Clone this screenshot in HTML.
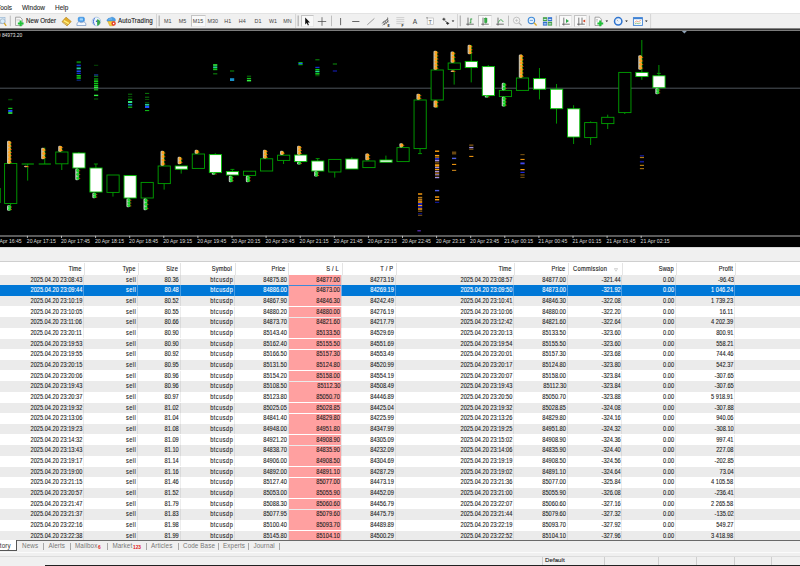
<!DOCTYPE html>
<html lang="en"><head><meta charset="utf-8"><title>Terminal</title>
<style>
html,body{margin:0;padding:0;}
body{width:800px;height:566px;overflow:hidden;position:relative;background:#f0f0f0;
 font-family:"Liberation Sans",sans-serif;color:#222;}
div,span{box-sizing:border-box;}
.abs{position:absolute;}
#menubar{position:absolute;left:0;top:0;width:800px;height:13px;background:#fff;}
#menubar span{position:absolute;top:4px;font-size:7.2px;line-height:8px;color:#2a2a2a;white-space:nowrap;transform:scaleX(0.9);transform-origin:0 50%;-webkit-text-stroke:0.1px currentColor;}
#toolbar{position:absolute;left:0;top:13px;width:800px;height:16px;background:#f0f0f0;border-top:1px solid #e3e3e3;}
.tbt{position:absolute;font-size:6.9px;line-height:8px;color:#222;white-space:nowrap;top:16.7px;transform:scaleX(0.9);transform-origin:0 50%;-webkit-text-stroke:0.12px currentColor;}
.tf{position:absolute;font-size:5.4px;line-height:7px;color:#444;white-space:nowrap;top:18px;text-align:center;width:16px;}
#chart{position:absolute;left:0;top:29px;width:800px;height:219px;background:#000;}
#tbl{position:absolute;left:0;top:261px;width:800px;height:280px;background:#fff;border-top:1px solid #cfcfcf;}
.row{position:absolute;left:0;width:800px;height:10.667px;}
.g{background:#ebebeb;}
.sel{background:#0078d7;}
.c{position:absolute;top:0;height:10.667px;font-size:6.7px;line-height:10.9px;text-align:right;color:#1a1a1a;white-space:nowrap;padding-right:0.9px;border-right:1px solid rgba(0,0,0,0.07);overflow:hidden;-webkit-text-stroke:0.1px currentColor;}
.c span,.h span{display:inline-block;transform:scaleX(0.845);transform-origin:100% 50%;}
.t{letter-spacing:0.55px;}
.sel .c{color:#fff;border-right-color:rgba(255,255,255,0.28);}
.sl{position:absolute;top:0.35px;height:10px;background:#ffa0a0;}
.sel .sl{outline:0.6px solid #3c8ad8;}
.sel .c.slc{color:#222;}
.h{position:absolute;top:1px;height:12px;font-size:6.8px;line-height:12.4px;text-align:right;color:#1a1a1a;white-space:nowrap;padding-right:2.5px;border-right:1px solid #e4e4e4;letter-spacing:0.2px;-webkit-text-stroke:0.12px currentColor;}
#tabs{position:absolute;left:0;top:540px;width:800px;height:26px;background:#f0f0f0;border-top:1px solid #6a6a6a;}
.tab{position:absolute;top:542.3px;font-size:6.3px;line-height:8px;color:#777;white-space:nowrap;letter-spacing:0.1px;}
.tsep{position:absolute;top:543.4px;width:0.8px;height:6.5px;background:#a8a8a8;}
</style></head><body>

<div id="menubar"><span style="left:-3.2px">Tools</span><span style="left:21.7px">Window</span><span style="left:55px">Help</span></div>
<div id="toolbar"></div>
<div class="abs" style="left:0;top:27.5px;width:800px;height:3.2px;background:linear-gradient(#a0a0a0 0,#6a6a6a 0.9px,#3a3a3a 1px,#3a3a3a 2.1px,#7c7c7c 2.2px,#7c7c7c 3px,#000 3.2px);z-index:3"></div>
<div class="tbt" style="left:25.8px">New Order</div>
<div class="tbt" style="left:117.8px;letter-spacing:0.12px">AutoTrading</div>
<div class="abs" style="left:191.2px;top:15px;width:14.40px;height:12.3px;background:#f9f9f9;border:0.7px solid #c4c4c4;border-right-color:#e8e8e8;border-bottom-color:#e8e8e8"></div>
<div class="abs" style="left:300.6px;top:15px;width:13.20px;height:12.3px;background:#f9f9f9;border:0.7px solid #c4c4c4;border-right-color:#e8e8e8;border-bottom-color:#e8e8e8"></div>
<div class="abs" style="left:478px;top:15px;width:14.00px;height:12.3px;background:#f9f9f9;border:0.7px solid #c4c4c4;border-right-color:#e8e8e8;border-bottom-color:#e8e8e8"></div>
<div class="abs" style="left:558.8px;top:15px;width:13.20px;height:12.3px;background:#f9f9f9;border:0.7px solid #c4c4c4;border-right-color:#e8e8e8;border-bottom-color:#e8e8e8"></div>
<div class="abs" style="left:573.8px;top:15px;width:13.20px;height:12.3px;background:#f9f9f9;border:0.7px solid #c4c4c4;border-right-color:#e8e8e8;border-bottom-color:#e8e8e8"></div>
<div class="tf" style="left:159.80px">M1</div>
<div class="tf" style="left:174.50px">M5</div>
<div class="tf" style="left:190.00px">M15</div>
<div class="tf" style="left:204.80px">M30</div>
<div class="tf" style="left:219.70px">H1</div>
<div class="tf" style="left:234.30px">H4</div>
<div class="tf" style="left:250.00px">D1</div>
<div class="tf" style="left:265.00px">W1</div>
<div class="tf" style="left:279.50px">MN</div>
<svg class="abs" style="left:0;top:0" width="800" height="32" viewBox="0 0 800 32">
<line x1="10.3" y1="15.6" x2="10.3" y2="26.2" stroke="#a8a8a8" stroke-width="0.7"/>
<line x1="156.5" y1="14" x2="156.5" y2="28" stroke="#c8c8c8" stroke-width="0.7"/>
<line x1="159.2" y1="15.6" x2="159.2" y2="26.2" stroke="#b4b4b4" stroke-width="1.3"/>
<line x1="295.6" y1="14" x2="295.6" y2="28" stroke="#c8c8c8" stroke-width="0.7"/>
<line x1="298.2" y1="15.6" x2="298.2" y2="26.2" stroke="#b4b4b4" stroke-width="1.3"/>
<line x1="331.5" y1="15.6" x2="331.5" y2="26.2" stroke="#a8a8a8" stroke-width="0.7"/>
<line x1="457.5" y1="14" x2="457.5" y2="28" stroke="#c8c8c8" stroke-width="0.7"/>
<line x1="460.3" y1="15.6" x2="460.3" y2="26.2" stroke="#b4b4b4" stroke-width="1.3"/>
<line x1="508.5" y1="15.6" x2="508.5" y2="26.2" stroke="#a8a8a8" stroke-width="0.7"/>
<line x1="556.3" y1="15.6" x2="556.3" y2="26.2" stroke="#a8a8a8" stroke-width="0.7"/>
<line x1="589.4" y1="15.6" x2="589.4" y2="26.2" stroke="#a8a8a8" stroke-width="0.7"/>
<line x1="650.6" y1="14" x2="650.6" y2="28" stroke="#c8c8c8" stroke-width="0.7"/>
<rect x="-2" y="17.3" width="7" height="6" fill="#dcecf8" stroke="#8fb0cf" stroke-width="0.6"/>
<circle cx="2.6" cy="21.2" r="2.4" fill="#d8ecfa" stroke="#9ab" stroke-width="0.7"/>
<line x1="4.2" y1="23.2" x2="6.2" y2="25.8" stroke="#d9a520" stroke-width="1.3"/>
<path d="M15.6 17.2h4.6l2 2v6.3h-6.6z" fill="#fafafa" stroke="#707070" stroke-width="0.6"/>
<path d="M16.6 19.4h3.4M16.6 20.8h3.4" stroke="#b5b5b5" stroke-width="0.5"/>
<path d="M20.6 20.6v5.6M17.8 23.4h5.8" stroke="#1fc238" stroke-width="2"/>
<path d="M62 21.7l4-4.5 5.2 4.3-4.1 4.4z" fill="#e3ab27" stroke="#b5851a" stroke-width="0.7" stroke-linejoin="round"/>
<path d="M63.8 20.6l5 2.9" stroke="#fff07a" stroke-width="1.5" fill="none"/>
<path d="M63.4 22.6l3.8 2.4" stroke="#d9c58a" stroke-width="0.9" fill="none"/>
<rect x="78.2" y="17.2" width="6.2" height="4.6" rx="1.3" fill="#3f9bea" stroke="#2f80d8" stroke-width="0.5"/>
<rect x="79.6" y="18.3" width="3.4" height="2.2" rx="0.6" fill="#9fd2fb"/>
<path d="M76.9 25.5c-0.4-2.6 1.4-3.9 2.6-3.6 1 1 2.6 1 3.6 0 1.4-0.3 3.2 1 2.8 3.6z" fill="#f4f8fd" stroke="#6f90c2" stroke-width="0.7"/>
<circle cx="96.4" cy="21.5" r="4.3" fill="#eef4fb" stroke="#a9c4e2" stroke-width="0.9"/>
<path d="M94.6 18.2c-1.5 2.1-1.5 4.6 0 6.6" fill="none" stroke="#3f6fd8" stroke-width="1"/>
<path d="M97 19.2c2.6 0.2 3.6 2.2 3.2 3.6-0.4 1.6-1.6 2.8-3 3z" fill="#34a648"/>
<circle cx="96.6" cy="21.2" r="0.8" fill="#2450b8"/>
<path d="M107.6 21l7.4-0.2-1.6 4.9-3.6 0.1z" fill="#f6cf3a" stroke="#c8961c" stroke-width="0.5"/>
<path d="M106.9 20.9c0.2-2 1.8-3 3.2-2.8 0.8-1 3-1.2 3.8-0.2 1.2 0.2 1.6 1.6 1.4 2.8z" fill="#4a9fe6" stroke="#3683cf" stroke-width="0.5"/>
<path d="M108.6 19.8c1-0.9 2.4-1.1 3.4-0.6" stroke="#a8d6fa" stroke-width="0.6" fill="none"/>
<circle cx="113.6" cy="23.5" r="2.2" fill="#e23b2c"/>
<rect x="112.9" y="22.8" width="1.4" height="1.4" fill="#fff"/>
<path d="M305.2 17.4v7l1.6-1.5 1.1 2.5 1-0.5-1.1-2.4h2.2z" fill="#111"/>
<path d="M322 17.2v8.6M317.8 21.5h8.4" stroke="#444" stroke-width="0.7"/>
<line x1="340.6" y1="18" x2="340.6" y2="25.2" stroke="#444" stroke-width="0.8"/>
<line x1="352.2" y1="21.5" x2="359.4" y2="21.5" stroke="#444" stroke-width="0.8"/>
<line x1="367.3" y1="24.8" x2="374.4" y2="18.4" stroke="#777" stroke-width="0.7"/>
<path d="M381.8 23.4l6.4-4.6M382.6 25.2l6.4-4.6M383.4 21.4l1.4 3.6M385 20.4l1.4 3.6M386.6 19.4l1.4 3.4M387.6 17.4v3" stroke="#444" stroke-width="0.6" fill="none"/>
<text x="387.6" y="26.6" font-size="3.4" font-family="Liberation Sans, sans-serif" font-weight="bold" fill="#222">E</text>
<path d="M396.3 17.6h8M396.3 19.6h8M396.3 21.6h8M396.3 23.6h8" stroke="#b8b8b8" stroke-width="0.6"/>
<text x="401.6" y="26.8" font-size="3.4" font-family="Liberation Sans, sans-serif" font-weight="bold" fill="#222">F</text>
<text x="412.8" y="23.8" font-size="6.6" font-family="Liberation Sans, sans-serif" fill="#444">A</text>
<rect x="427.2" y="18" width="6.2" height="6.4" fill="#fbfbfb" stroke="#b0b0b0" stroke-width="0.6"/>
<text x="428.6" y="23.6" font-size="5.4" font-family="Liberation Sans, sans-serif" fill="#555">T</text>
<rect x="426.4" y="17.2" width="1.2" height="1.2" fill="#777"/>
<path d="M442.4 19.2h3M443.9 17.8v2.8M445 20.6l2.6 2.6M446.2 23.4h3M447.7 22v2.8" stroke="#222" stroke-width="0.9" fill="none"/>
<path d="M451.7 20.6h2.6l-1.3 1.5z" fill="#111"/>
<path d="M468 17.6v8M466.2 24.2h7.6" stroke="#444" stroke-width="0.7" fill="none"/>
<path d="M470.8 18.6v4.6M470.8 19h1.4M469.6 22.8h1.2" stroke="#2a9a3a" stroke-width="0.9" fill="none"/>
<path d="M483 17.6v8M481.2 24.2h7.6" stroke="#444" stroke-width="0.7" fill="none"/>
<path d="M485.8 17.2v6.6" stroke="#2a9a3a" stroke-width="0.6"/>
<rect x="484.6" y="18.2" width="2.4" height="4.4" fill="#35b045" stroke="#1f8a30" stroke-width="0.4"/>
<path d="M498 17.6v8M496.2 24.2h7.6" stroke="#444" stroke-width="0.7" fill="none"/>
<path d="M498.4 22.6c1.2-3.4 3.2-3.8 4.8-0.6" stroke="#2a9a3a" stroke-width="0.8" fill="none"/>
<circle cx="516.6" cy="20.4" r="3.2" fill="#f4f4f4" stroke="#b5b5b5" stroke-width="0.8"/>
<path d="M515 20.4h3.2M516.6 18.8v3.2" stroke="#b5b5b5" stroke-width="0.6"/>
<line x1="519" y1="22.8" x2="521.6" y2="25.4" stroke="#b0b0b0" stroke-width="1.2"/>
<circle cx="531.4" cy="20.4" r="3.2" fill="#e4f0fb" stroke="#3f8ad8" stroke-width="1.1"/>
<path d="M529.8 20.4h3.2" stroke="#3f8ad8" stroke-width="0.7"/>
<line x1="534" y1="22.8" x2="536.6" y2="25.4" stroke="#dcaa2c" stroke-width="1.4"/>
<rect x="542.9" y="17.2" width="4.3" height="3.9" fill="#43a047"/>
<rect x="547.8" y="17.2" width="4.3" height="3.9" fill="#2f6fd0"/>
<rect x="542.9" y="21.7" width="4.3" height="3.9" fill="#2f6fd0"/>
<rect x="547.8" y="21.7" width="4.3" height="3.9" fill="#43a047"/>
<path d="M543.6 19.4h2.9M548.5 19.4h2.9M543.6 23.9h2.9M548.5 23.9h2.9" stroke="#dfeefc" stroke-width="1"/>
<path d="M563.8 17.6v8M562 24.2h7.8" stroke="#444" stroke-width="0.7" fill="none"/>
<path d="M566 19l3 2-3 2z" fill="#2fa84a"/>
<path d="M578.8 17.6v8M577 24.2h7.8M582 17.6v6.6" stroke="#444" stroke-width="0.7" fill="none"/>
<path d="M585.2 19.4l-2.6 1.6 2.6 1.6z" fill="#d84a2a"/>
<path d="M595 17.2h4.4l2 2v6.3h-6.4z" fill="#fafafa" stroke="#707070" stroke-width="0.6"/>
<path d="M596 19.6h2M596 21h2" stroke="#999" stroke-width="0.5"/>
<path d="M600.2 20.6v5.6M597.4 23.4h5.8" stroke="#1fc238" stroke-width="2"/>
<path d="M605.5 20.6h2.6l-1.3 1.5z" fill="#111"/>
<circle cx="618.2" cy="21.3" r="3.7" fill="#eaf2fb" stroke="#2f74cf" stroke-width="1.5"/>
<path d="M618.2 21.3l-1.4-1.6" stroke="#888" stroke-width="0.6"/>
<path d="M625.2 20.6h2.6l-1.3 1.5z" fill="#111"/>
<rect x="633.4" y="17.6" width="9" height="7.8" fill="#fdfdfd" stroke="#3f82d4" stroke-width="0.9"/>
<rect x="633.4" y="17.6" width="9" height="1.6" fill="#3f82d4"/>
<path d="M634.6 22.4l2-1.4 1.8 0.8 2.4-1.4" stroke="#d8643a" stroke-width="0.6" fill="none"/>
<path d="M634.6 24l2-0.8 1.8 0.4 2.4-0.8" stroke="#43a047" stroke-width="0.6" fill="none"/>
<path d="M645 20.6h2.6l-1.3 1.5z" fill="#111"/>
</svg>
<div id="chart"></div>
<div class="abs" style="left:0;top:246.7px;width:800px;height:1.6px;background:#d8d8d8"></div>
<svg class="abs" style="left:0;top:0" width="800" height="250" viewBox="0 0 800 250">
<line x1="0" y1="88.2" x2="800" y2="88.2" stroke="#575d67" stroke-width="0.9"/>
<line x1="0.2" y1="188" x2="0.2" y2="203" stroke="#00a400" stroke-width="1"/>
<line x1="10.60" y1="203.5" x2="10.60" y2="209" stroke="#00a400" stroke-width="0.9"/>
<rect x="4.60" y="163.5" width="12.2" height="40.00" fill="#000" stroke="#00a400" stroke-width="0.9"/>
<line x1="27.66" y1="164" x2="27.66" y2="180.6" stroke="#00a400" stroke-width="0.9"/>
<line x1="21.66" y1="164" x2="33.86" y2="164" stroke="#00a400" stroke-width="1.1"/>
<line x1="44.72" y1="147.5" x2="44.72" y2="164" stroke="#00a400" stroke-width="0.9"/>
<line x1="38.72" y1="164" x2="50.92" y2="164" stroke="#00a400" stroke-width="1.1"/>
<line x1="61.78" y1="163.8" x2="61.78" y2="170" stroke="#00a400" stroke-width="0.9"/>
<rect x="55.78" y="152" width="12.2" height="11.80" fill="#000" stroke="#00a400" stroke-width="0.9"/>
<line x1="78.84" y1="152" x2="78.84" y2="153" stroke="#00a400" stroke-width="0.9"/>
<rect x="72.84" y="153" width="12.2" height="15.00" fill="#fff" stroke="#00c000" stroke-width="0.9"/>
<line x1="95.90" y1="164" x2="95.90" y2="168" stroke="#00a400" stroke-width="0.9"/>
<rect x="89.90" y="168" width="12.2" height="24.00" fill="#fff" stroke="#00c000" stroke-width="0.9"/>
<line x1="112.96" y1="192.4" x2="112.96" y2="196.6" stroke="#00a400" stroke-width="0.9"/>
<rect x="106.96" y="175" width="12.2" height="17.40" fill="#000" stroke="#00a400" stroke-width="0.9"/>
<line x1="130.02" y1="175" x2="130.02" y2="175.6" stroke="#00a400" stroke-width="0.9"/>
<rect x="124.02" y="175.6" width="12.2" height="22.40" fill="#fff" stroke="#00c000" stroke-width="0.9"/>
<rect x="141.08" y="182.4" width="12.2" height="15.60" fill="#000" stroke="#00a400" stroke-width="0.9"/>
<line x1="164.14" y1="183.6" x2="164.14" y2="189.6" stroke="#00a400" stroke-width="0.9"/>
<rect x="158.14" y="166" width="12.2" height="17.60" fill="#000" stroke="#00a400" stroke-width="0.9"/>
<line x1="181.20" y1="169.2" x2="181.20" y2="173.6" stroke="#00a400" stroke-width="0.9"/>
<rect x="175.20" y="166" width="12.2" height="3.20" fill="#fff" stroke="#00c000" stroke-width="0.9"/>
<rect x="192.26" y="154" width="12.2" height="14.40" fill="#000" stroke="#00a400" stroke-width="0.9"/>
<line x1="215.32" y1="153.2" x2="215.32" y2="154.6" stroke="#00a400" stroke-width="0.9"/>
<line x1="215.32" y1="172.6" x2="215.32" y2="173.4" stroke="#00a400" stroke-width="0.9"/>
<rect x="209.32" y="154.6" width="12.2" height="18.00" fill="#fff" stroke="#00c000" stroke-width="0.9"/>
<line x1="232.38" y1="169.4" x2="232.38" y2="171.6" stroke="#00a400" stroke-width="0.9"/>
<rect x="226.38" y="171.6" width="12.2" height="3.40" fill="#fff" stroke="#00c000" stroke-width="0.9"/>
<rect x="243.44" y="171.2" width="12.2" height="4.20" fill="#000" stroke="#00a400" stroke-width="0.9"/>
<rect x="260.50" y="158.8" width="12.2" height="12.20" fill="#000" stroke="#00a400" stroke-width="0.9"/>
<line x1="283.56" y1="160.4" x2="283.56" y2="164" stroke="#00a400" stroke-width="0.9"/>
<rect x="277.56" y="155.2" width="12.2" height="5.20" fill="#000" stroke="#00a400" stroke-width="0.9"/>
<line x1="300.62" y1="161.6" x2="300.62" y2="163" stroke="#00a400" stroke-width="0.9"/>
<rect x="294.62" y="155" width="12.2" height="6.60" fill="#fff" stroke="#00c000" stroke-width="0.9"/>
<line x1="317.68" y1="158.6" x2="317.68" y2="161" stroke="#00a400" stroke-width="0.9"/>
<rect x="311.68" y="161" width="12.2" height="10.00" fill="#fff" stroke="#00c000" stroke-width="0.9"/>
<line x1="334.74" y1="159" x2="334.74" y2="159.4" stroke="#00a400" stroke-width="0.9"/>
<line x1="334.74" y1="172" x2="334.74" y2="177.6" stroke="#00a400" stroke-width="0.9"/>
<rect x="328.74" y="159.4" width="12.2" height="12.60" fill="#000" stroke="#00a400" stroke-width="0.9"/>
<line x1="351.80" y1="157.2" x2="351.80" y2="159" stroke="#00a400" stroke-width="0.9"/>
<rect x="345.80" y="159" width="12.2" height="10.00" fill="#fff" stroke="#00c000" stroke-width="0.9"/>
<line x1="368.86" y1="160" x2="368.86" y2="161" stroke="#00a400" stroke-width="0.9"/>
<rect x="362.86" y="161" width="12.2" height="6.60" fill="#000" stroke="#00a400" stroke-width="0.9"/>
<line x1="385.92" y1="155.6" x2="385.92" y2="160" stroke="#00a400" stroke-width="0.9"/>
<rect x="379.92" y="160" width="12.2" height="2.20" fill="#fff" stroke="#00c000" stroke-width="0.9"/>
<rect x="396.98" y="147.6" width="12.2" height="14.00" fill="#000" stroke="#00a400" stroke-width="0.9"/>
<line x1="420.04" y1="148.6" x2="420.04" y2="153.6" stroke="#00a400" stroke-width="0.9"/>
<rect x="414.04" y="100" width="12.2" height="48.60" fill="#000" stroke="#00a400" stroke-width="0.9"/>
<line x1="437.10" y1="100" x2="437.10" y2="108" stroke="#00a400" stroke-width="0.9"/>
<rect x="431.10" y="70" width="12.2" height="30.00" fill="#000" stroke="#00a400" stroke-width="0.9"/>
<line x1="454.16" y1="58" x2="454.16" y2="63" stroke="#00a400" stroke-width="0.9"/>
<line x1="454.16" y1="69.4" x2="454.16" y2="84.6" stroke="#00a400" stroke-width="0.9"/>
<rect x="448.16" y="63" width="12.2" height="6.40" fill="#000" stroke="#00a400" stroke-width="0.9"/>
<line x1="471.22" y1="45" x2="471.22" y2="61.4" stroke="#00a400" stroke-width="0.9"/>
<line x1="471.22" y1="67.6" x2="471.22" y2="82.4" stroke="#00a400" stroke-width="0.9"/>
<rect x="465.22" y="61.4" width="12.2" height="6.20" fill="#fff" stroke="#00c000" stroke-width="0.9"/>
<line x1="488.28" y1="65" x2="488.28" y2="66.6" stroke="#00a400" stroke-width="0.9"/>
<line x1="488.28" y1="95.6" x2="488.28" y2="97" stroke="#00a400" stroke-width="0.9"/>
<rect x="482.28" y="66.6" width="12.2" height="29.00" fill="#fff" stroke="#00c000" stroke-width="0.9"/>
<rect x="499.34" y="90.4" width="12.2" height="6.20" fill="#000" stroke="#00a400" stroke-width="0.9"/>
<rect x="516.40" y="78" width="12.2" height="12.40" fill="#000" stroke="#00a400" stroke-width="0.9"/>
<line x1="539.46" y1="68" x2="539.46" y2="78.6" stroke="#00a400" stroke-width="0.9"/>
<line x1="539.46" y1="89.2" x2="539.46" y2="99.4" stroke="#00a400" stroke-width="0.9"/>
<rect x="533.46" y="78.6" width="12.2" height="10.60" fill="#fff" stroke="#00c000" stroke-width="0.9"/>
<line x1="556.52" y1="84" x2="556.52" y2="89.2" stroke="#00a400" stroke-width="0.9"/>
<line x1="556.52" y1="108.7" x2="556.52" y2="123.6" stroke="#00a400" stroke-width="0.9"/>
<rect x="550.52" y="89.2" width="12.2" height="19.50" fill="#fff" stroke="#00c000" stroke-width="0.9"/>
<line x1="573.58" y1="105.2" x2="573.58" y2="108.8" stroke="#00a400" stroke-width="0.9"/>
<line x1="573.58" y1="137" x2="573.58" y2="144" stroke="#00a400" stroke-width="0.9"/>
<rect x="567.58" y="108.8" width="12.2" height="28.20" fill="#fff" stroke="#00c000" stroke-width="0.9"/>
<line x1="590.64" y1="121.4" x2="590.64" y2="122.6" stroke="#00a400" stroke-width="0.9"/>
<line x1="590.64" y1="137.6" x2="590.64" y2="145" stroke="#00a400" stroke-width="0.9"/>
<rect x="584.64" y="122.6" width="12.2" height="15.00" fill="#000" stroke="#00a400" stroke-width="0.9"/>
<line x1="607.70" y1="114.7" x2="607.70" y2="117.3" stroke="#00a400" stroke-width="0.9"/>
<line x1="607.70" y1="123.6" x2="607.70" y2="129" stroke="#00a400" stroke-width="0.9"/>
<rect x="601.70" y="117.3" width="12.2" height="6.30" fill="#000" stroke="#00a400" stroke-width="0.9"/>
<line x1="624.76" y1="112.6" x2="624.76" y2="114" stroke="#00a400" stroke-width="0.9"/>
<rect x="618.76" y="72.4" width="12.2" height="40.20" fill="#000" stroke="#00a400" stroke-width="0.9"/>
<line x1="641.82" y1="40" x2="641.82" y2="72.4" stroke="#00a400" stroke-width="0.9"/>
<line x1="641.82" y1="76.6" x2="641.82" y2="79.8" stroke="#00a400" stroke-width="0.9"/>
<rect x="635.82" y="72.4" width="12.2" height="4.20" fill="#fff" stroke="#00c000" stroke-width="0.9"/>
<line x1="658.88" y1="65" x2="658.88" y2="75.8" stroke="#00a400" stroke-width="0.9"/>
<rect x="652.88" y="75.8" width="12.2" height="12.00" fill="#fff" stroke="#00c000" stroke-width="0.9"/>
<line x1="93.90" y1="164" x2="97.90" y2="164" stroke="#00a400" stroke-width="0.9"/>
<line x1="230.38" y1="169.4" x2="234.38" y2="169.4" stroke="#00a400" stroke-width="0.9"/>
<line x1="315.68" y1="158.6" x2="319.68" y2="158.6" stroke="#00a400" stroke-width="0.9"/>
<line x1="418.04" y1="153.6" x2="422.04" y2="153.6" stroke="#00a400" stroke-width="0.9"/>
<line x1="656.88" y1="73.4" x2="660.88" y2="73.4" stroke="#00a400" stroke-width="0.9"/>
<line x1="10.60" y1="141.5" x2="10.60" y2="163.5" stroke="#00a400" stroke-width="0.9"/>
<line x1="10.60" y1="206.0" x2="10.60" y2="210.5" stroke="#00a400" stroke-width="0.9"/>
<line x1="44.72" y1="148.5" x2="44.72" y2="159" stroke="#00a400" stroke-width="0.9"/>
<line x1="61.78" y1="146.5" x2="61.78" y2="151.5" stroke="#00a400" stroke-width="0.9"/>
<line x1="78.84" y1="169.1" x2="78.84" y2="180" stroke="#00a400" stroke-width="0.9"/>
<line x1="95.90" y1="193.5" x2="95.90" y2="198" stroke="#00a400" stroke-width="0.9"/>
<line x1="130.02" y1="199.1" x2="130.02" y2="207" stroke="#00a400" stroke-width="0.9"/>
<line x1="147.08" y1="199.1" x2="147.08" y2="210" stroke="#00a400" stroke-width="0.9"/>
<line x1="164.14" y1="151.5" x2="164.14" y2="165.6" stroke="#00a400" stroke-width="0.9"/>
<line x1="181.20" y1="157.5" x2="181.20" y2="164" stroke="#00a400" stroke-width="0.9"/>
<line x1="198.26" y1="150.5" x2="198.26" y2="153.6" stroke="#00a400" stroke-width="0.9"/>
<line x1="232.38" y1="176.5" x2="232.38" y2="182" stroke="#00a400" stroke-width="0.9"/>
<line x1="249.44" y1="176.5" x2="249.44" y2="182" stroke="#00a400" stroke-width="0.9"/>
<line x1="266.50" y1="150.5" x2="266.50" y2="158.4" stroke="#00a400" stroke-width="0.9"/>
<line x1="283.56" y1="151.5" x2="283.56" y2="154.8" stroke="#00a400" stroke-width="0.9"/>
<line x1="300.62" y1="146.5" x2="300.62" y2="154.6" stroke="#00a400" stroke-width="0.9"/>
<line x1="300.62" y1="162.5" x2="300.62" y2="164.4" stroke="#00a400" stroke-width="0.9"/>
<line x1="317.68" y1="171.9" x2="317.68" y2="176.4" stroke="#00a400" stroke-width="0.9"/>
<line x1="368.86" y1="154.1" x2="368.86" y2="160" stroke="#00a400" stroke-width="0.9"/>
<line x1="402.98" y1="143.9" x2="402.98" y2="147.2" stroke="#00a400" stroke-width="0.9"/>
<line x1="420.04" y1="94.5" x2="420.04" y2="99.6" stroke="#00a400" stroke-width="0.9"/>
<line x1="437.10" y1="51.5" x2="437.10" y2="69.6" stroke="#00a400" stroke-width="0.9"/>
<line x1="437.10" y1="101.1" x2="437.10" y2="107.4" stroke="#00a400" stroke-width="0.9"/>
<line x1="454.16" y1="52.1" x2="454.16" y2="62.6" stroke="#00a400" stroke-width="0.9"/>
<line x1="471.22" y1="45.5" x2="471.22" y2="54" stroke="#00a400" stroke-width="0.9"/>
<line x1="505.34" y1="83.5" x2="505.34" y2="90" stroke="#00a400" stroke-width="0.9"/>
<line x1="505.34" y1="97.5" x2="505.34" y2="106.4" stroke="#00a400" stroke-width="0.9"/>
<line x1="522.40" y1="55.1" x2="522.40" y2="77.6" stroke="#00a400" stroke-width="0.9"/>
<line x1="641.82" y1="55.9" x2="641.82" y2="69.6" stroke="#00a400" stroke-width="0.9"/>
<line x1="658.88" y1="88.9" x2="658.88" y2="94" stroke="#00a400" stroke-width="0.9"/>
<rect x="7.00" y="140.80" width="3.3" height="22.90" rx="1.3" fill="#fff3d6" opacity="0.78"/>
<ellipse cx="9.50" cy="142.61" rx="1.45" ry="1.61" fill="#ffa41c"/>
<rect x="10.60" y="142.51" width="1.4" height="0.8" fill="#e8380c" opacity="0.85"/>
<ellipse cx="9.50" cy="145.82" rx="1.45" ry="1.61" fill="#ffa41c"/>
<rect x="10.60" y="145.72" width="1.4" height="0.8" fill="#e8380c" opacity="0.85"/>
<ellipse cx="9.50" cy="149.04" rx="1.45" ry="1.61" fill="#ffa41c"/>
<rect x="10.60" y="148.94" width="1.4" height="0.8" fill="#e8380c" opacity="0.85"/>
<ellipse cx="9.50" cy="152.25" rx="1.45" ry="1.61" fill="#ffa41c"/>
<rect x="10.60" y="152.15" width="1.4" height="0.8" fill="#e8380c" opacity="0.85"/>
<ellipse cx="9.50" cy="155.46" rx="1.45" ry="1.61" fill="#ffa41c"/>
<rect x="10.60" y="155.36" width="1.4" height="0.8" fill="#e8380c" opacity="0.85"/>
<ellipse cx="9.50" cy="158.68" rx="1.45" ry="1.61" fill="#ffa41c"/>
<rect x="10.60" y="158.58" width="1.4" height="0.8" fill="#e8380c" opacity="0.85"/>
<ellipse cx="9.50" cy="161.89" rx="1.45" ry="1.61" fill="#ffa41c"/>
<rect x="10.60" y="161.79" width="1.4" height="0.8" fill="#e8380c" opacity="0.85"/>
<rect x="7.00" y="205.30" width="3.3" height="5.40" rx="1.3" fill="#eefff0" opacity="0.78"/>
<ellipse cx="9.50" cy="206.75" rx="1.45" ry="1.25" fill="#19d92d"/>
<rect x="10.60" y="206.65" width="1.4" height="0.8" fill="#e8380c" opacity="0.85"/>
<ellipse cx="9.50" cy="209.25" rx="1.45" ry="1.25" fill="#19d92d"/>
<rect x="10.60" y="209.15" width="1.4" height="0.8" fill="#e8380c" opacity="0.85"/>
<rect x="24.06" y="165.80" width="3.3" height="1.40" rx="1.3" fill="#fff3d6" opacity="0.78"/>
<ellipse cx="26.56" cy="166.50" rx="1.45" ry="0.50" fill="#ffa41c"/>
<rect x="27.66" y="166.40" width="1.4" height="0.8" fill="#e8380c" opacity="0.85"/>
<rect x="41.12" y="147.80" width="3.3" height="11.40" rx="1.3" fill="#fff3d6" opacity="0.78"/>
<ellipse cx="43.62" cy="149.83" rx="1.45" ry="1.70" fill="#ffa41c"/>
<rect x="44.72" y="149.73" width="1.4" height="0.8" fill="#e8380c" opacity="0.85"/>
<ellipse cx="43.62" cy="153.50" rx="1.45" ry="1.70" fill="#ffa41c"/>
<rect x="44.72" y="153.40" width="1.4" height="0.8" fill="#e8380c" opacity="0.85"/>
<ellipse cx="43.62" cy="157.17" rx="1.45" ry="1.70" fill="#ffa41c"/>
<rect x="44.72" y="157.07" width="1.4" height="0.8" fill="#e8380c" opacity="0.85"/>
<rect x="58.18" y="145.80" width="3.3" height="5.90" rx="1.3" fill="#fff3d6" opacity="0.78"/>
<ellipse cx="60.68" cy="147.38" rx="1.45" ry="1.38" fill="#ffa41c"/>
<rect x="61.78" y="147.28" width="1.4" height="0.8" fill="#e8380c" opacity="0.85"/>
<ellipse cx="60.68" cy="150.12" rx="1.45" ry="1.38" fill="#ffa41c"/>
<rect x="61.78" y="150.03" width="1.4" height="0.8" fill="#e8380c" opacity="0.85"/>
<rect x="75.24" y="168.40" width="3.3" height="11.80" rx="1.3" fill="#eefff0" opacity="0.78"/>
<ellipse cx="77.74" cy="170.50" rx="1.45" ry="1.70" fill="#19d92d"/>
<rect x="78.84" y="170.40" width="1.4" height="0.8" fill="#e8380c" opacity="0.85"/>
<ellipse cx="77.74" cy="174.30" rx="1.45" ry="1.70" fill="#19d92d"/>
<rect x="78.84" y="174.20" width="1.4" height="0.8" fill="#e8380c" opacity="0.85"/>
<ellipse cx="77.74" cy="178.10" rx="1.45" ry="1.70" fill="#19d92d"/>
<rect x="78.84" y="178.00" width="1.4" height="0.8" fill="#e8380c" opacity="0.85"/>
<rect x="92.30" y="192.80" width="3.3" height="5.40" rx="1.3" fill="#eefff0" opacity="0.78"/>
<ellipse cx="94.80" cy="194.25" rx="1.45" ry="1.25" fill="#19d92d"/>
<rect x="95.90" y="194.15" width="1.4" height="0.8" fill="#e8380c" opacity="0.85"/>
<ellipse cx="94.80" cy="196.75" rx="1.45" ry="1.25" fill="#19d92d"/>
<rect x="95.90" y="196.65" width="1.4" height="0.8" fill="#e8380c" opacity="0.85"/>
<rect x="126.42" y="198.40" width="3.3" height="8.80" rx="1.3" fill="#eefff0" opacity="0.78"/>
<ellipse cx="128.92" cy="200.00" rx="1.45" ry="1.40" fill="#19d92d"/>
<rect x="130.02" y="199.90" width="1.4" height="0.8" fill="#e8380c" opacity="0.85"/>
<ellipse cx="128.92" cy="202.80" rx="1.45" ry="1.40" fill="#19d92d"/>
<rect x="130.02" y="202.70" width="1.4" height="0.8" fill="#e8380c" opacity="0.85"/>
<ellipse cx="128.92" cy="205.60" rx="1.45" ry="1.40" fill="#19d92d"/>
<rect x="130.02" y="205.50" width="1.4" height="0.8" fill="#e8380c" opacity="0.85"/>
<rect x="143.48" y="198.40" width="3.3" height="11.80" rx="1.3" fill="#eefff0" opacity="0.78"/>
<ellipse cx="145.98" cy="200.50" rx="1.45" ry="1.70" fill="#19d92d"/>
<rect x="147.08" y="200.40" width="1.4" height="0.8" fill="#e8380c" opacity="0.85"/>
<ellipse cx="145.98" cy="204.30" rx="1.45" ry="1.70" fill="#19d92d"/>
<rect x="147.08" y="204.20" width="1.4" height="0.8" fill="#e8380c" opacity="0.85"/>
<ellipse cx="145.98" cy="208.10" rx="1.45" ry="1.70" fill="#19d92d"/>
<rect x="147.08" y="208.00" width="1.4" height="0.8" fill="#e8380c" opacity="0.85"/>
<rect x="160.54" y="150.80" width="3.3" height="15.00" rx="1.3" fill="#fff3d6" opacity="0.78"/>
<ellipse cx="163.04" cy="152.82" rx="1.45" ry="1.70" fill="#ffa41c"/>
<rect x="164.14" y="152.72" width="1.4" height="0.8" fill="#e8380c" opacity="0.85"/>
<ellipse cx="163.04" cy="156.47" rx="1.45" ry="1.70" fill="#ffa41c"/>
<rect x="164.14" y="156.38" width="1.4" height="0.8" fill="#e8380c" opacity="0.85"/>
<ellipse cx="163.04" cy="160.12" rx="1.45" ry="1.70" fill="#ffa41c"/>
<rect x="164.14" y="160.03" width="1.4" height="0.8" fill="#e8380c" opacity="0.85"/>
<ellipse cx="163.04" cy="163.77" rx="1.45" ry="1.70" fill="#ffa41c"/>
<rect x="164.14" y="163.67" width="1.4" height="0.8" fill="#e8380c" opacity="0.85"/>
<rect x="177.60" y="156.80" width="3.3" height="7.40" rx="1.3" fill="#fff3d6" opacity="0.78"/>
<ellipse cx="180.10" cy="158.75" rx="1.45" ry="1.70" fill="#ffa41c"/>
<rect x="181.20" y="158.65" width="1.4" height="0.8" fill="#e8380c" opacity="0.85"/>
<ellipse cx="180.10" cy="162.25" rx="1.45" ry="1.70" fill="#ffa41c"/>
<rect x="181.20" y="162.15" width="1.4" height="0.8" fill="#e8380c" opacity="0.85"/>
<rect x="194.66" y="149.80" width="3.3" height="4.00" rx="1.3" fill="#fff3d6" opacity="0.78"/>
<ellipse cx="197.16" cy="151.80" rx="1.45" ry="1.70" fill="#ffa41c"/>
<rect x="198.26" y="151.70" width="1.4" height="0.8" fill="#e8380c" opacity="0.85"/>
<rect x="211.72" y="172.80" width="3.3" height="2.00" rx="1.3" fill="#eefff0" opacity="0.78"/>
<ellipse cx="214.22" cy="173.80" rx="1.45" ry="0.80" fill="#19d92d"/>
<rect x="215.32" y="173.70" width="1.4" height="0.8" fill="#e8380c" opacity="0.85"/>
<rect x="228.78" y="175.80" width="3.3" height="6.40" rx="1.3" fill="#eefff0" opacity="0.78"/>
<ellipse cx="231.28" cy="177.50" rx="1.45" ry="1.50" fill="#19d92d"/>
<rect x="232.38" y="177.40" width="1.4" height="0.8" fill="#e8380c" opacity="0.85"/>
<ellipse cx="231.28" cy="180.50" rx="1.45" ry="1.50" fill="#19d92d"/>
<rect x="232.38" y="180.40" width="1.4" height="0.8" fill="#e8380c" opacity="0.85"/>
<rect x="245.84" y="175.80" width="3.3" height="6.40" rx="1.3" fill="#eefff0" opacity="0.78"/>
<ellipse cx="248.34" cy="177.50" rx="1.45" ry="1.50" fill="#19d92d"/>
<rect x="249.44" y="177.40" width="1.4" height="0.8" fill="#e8380c" opacity="0.85"/>
<ellipse cx="248.34" cy="180.50" rx="1.45" ry="1.50" fill="#19d92d"/>
<rect x="249.44" y="180.40" width="1.4" height="0.8" fill="#e8380c" opacity="0.85"/>
<rect x="262.90" y="149.80" width="3.3" height="8.80" rx="1.3" fill="#fff3d6" opacity="0.78"/>
<ellipse cx="265.40" cy="151.40" rx="1.45" ry="1.40" fill="#ffa41c"/>
<rect x="266.50" y="151.30" width="1.4" height="0.8" fill="#e8380c" opacity="0.85"/>
<ellipse cx="265.40" cy="154.20" rx="1.45" ry="1.40" fill="#ffa41c"/>
<rect x="266.50" y="154.10" width="1.4" height="0.8" fill="#e8380c" opacity="0.85"/>
<ellipse cx="265.40" cy="157.00" rx="1.45" ry="1.40" fill="#ffa41c"/>
<rect x="266.50" y="156.90" width="1.4" height="0.8" fill="#e8380c" opacity="0.85"/>
<rect x="279.96" y="150.80" width="3.3" height="4.20" rx="1.3" fill="#fff3d6" opacity="0.78"/>
<ellipse cx="282.46" cy="152.90" rx="1.45" ry="1.70" fill="#ffa41c"/>
<rect x="283.56" y="152.80" width="1.4" height="0.8" fill="#e8380c" opacity="0.85"/>
<rect x="297.02" y="145.80" width="3.3" height="9.00" rx="1.3" fill="#fff3d6" opacity="0.78"/>
<ellipse cx="299.52" cy="147.43" rx="1.45" ry="1.43" fill="#ffa41c"/>
<rect x="300.62" y="147.33" width="1.4" height="0.8" fill="#e8380c" opacity="0.85"/>
<ellipse cx="299.52" cy="150.30" rx="1.45" ry="1.43" fill="#ffa41c"/>
<rect x="300.62" y="150.20" width="1.4" height="0.8" fill="#e8380c" opacity="0.85"/>
<ellipse cx="299.52" cy="153.17" rx="1.45" ry="1.43" fill="#ffa41c"/>
<rect x="300.62" y="153.07" width="1.4" height="0.8" fill="#e8380c" opacity="0.85"/>
<rect x="297.02" y="161.80" width="3.3" height="2.80" rx="1.3" fill="#eefff0" opacity="0.78"/>
<ellipse cx="299.52" cy="163.20" rx="1.45" ry="1.20" fill="#19d92d"/>
<rect x="300.62" y="163.10" width="1.4" height="0.8" fill="#e8380c" opacity="0.85"/>
<rect x="314.08" y="171.20" width="3.3" height="5.40" rx="1.3" fill="#eefff0" opacity="0.78"/>
<ellipse cx="316.58" cy="172.65" rx="1.45" ry="1.25" fill="#19d92d"/>
<rect x="317.68" y="172.55" width="1.4" height="0.8" fill="#e8380c" opacity="0.85"/>
<ellipse cx="316.58" cy="175.15" rx="1.45" ry="1.25" fill="#19d92d"/>
<rect x="317.68" y="175.05" width="1.4" height="0.8" fill="#e8380c" opacity="0.85"/>
<rect x="365.26" y="153.40" width="3.3" height="6.80" rx="1.3" fill="#fff3d6" opacity="0.78"/>
<ellipse cx="367.76" cy="155.20" rx="1.45" ry="1.60" fill="#ffa41c"/>
<rect x="368.86" y="155.10" width="1.4" height="0.8" fill="#e8380c" opacity="0.85"/>
<ellipse cx="367.76" cy="158.40" rx="1.45" ry="1.60" fill="#ffa41c"/>
<rect x="368.86" y="158.30" width="1.4" height="0.8" fill="#e8380c" opacity="0.85"/>
<rect x="399.38" y="143.20" width="3.3" height="4.20" rx="1.3" fill="#fff3d6" opacity="0.78"/>
<ellipse cx="401.88" cy="145.30" rx="1.45" ry="1.70" fill="#ffa41c"/>
<rect x="402.98" y="145.20" width="1.4" height="0.8" fill="#e8380c" opacity="0.85"/>
<rect x="416.44" y="93.80" width="3.3" height="6.00" rx="1.3" fill="#fff3d6" opacity="0.78"/>
<ellipse cx="418.94" cy="95.40" rx="1.45" ry="1.40" fill="#ffa41c"/>
<rect x="420.04" y="95.30" width="1.4" height="0.8" fill="#e8380c" opacity="0.85"/>
<ellipse cx="418.94" cy="98.20" rx="1.45" ry="1.40" fill="#ffa41c"/>
<rect x="420.04" y="98.10" width="1.4" height="0.8" fill="#e8380c" opacity="0.85"/>
<rect x="433.50" y="50.80" width="3.3" height="19.00" rx="1.3" fill="#fff3d6" opacity="0.78"/>
<ellipse cx="436.00" cy="52.55" rx="1.45" ry="1.55" fill="#ffa41c"/>
<rect x="437.10" y="52.45" width="1.4" height="0.8" fill="#e8380c" opacity="0.85"/>
<ellipse cx="436.00" cy="55.65" rx="1.45" ry="1.55" fill="#ffa41c"/>
<rect x="437.10" y="55.55" width="1.4" height="0.8" fill="#e8380c" opacity="0.85"/>
<ellipse cx="436.00" cy="58.75" rx="1.45" ry="1.55" fill="#ffa41c"/>
<rect x="437.10" y="58.65" width="1.4" height="0.8" fill="#e8380c" opacity="0.85"/>
<ellipse cx="436.00" cy="61.85" rx="1.45" ry="1.55" fill="#ffa41c"/>
<rect x="437.10" y="61.75" width="1.4" height="0.8" fill="#e8380c" opacity="0.85"/>
<ellipse cx="436.00" cy="64.95" rx="1.45" ry="1.55" fill="#ffa41c"/>
<rect x="437.10" y="64.85" width="1.4" height="0.8" fill="#e8380c" opacity="0.85"/>
<ellipse cx="436.00" cy="68.05" rx="1.45" ry="1.55" fill="#ffa41c"/>
<rect x="437.10" y="67.95" width="1.4" height="0.8" fill="#e8380c" opacity="0.85"/>
<rect x="433.50" y="100.40" width="3.3" height="7.20" rx="1.3" fill="#fff3d6" opacity="0.78"/>
<ellipse cx="436.00" cy="102.30" rx="1.45" ry="1.70" fill="#ffa41c"/>
<rect x="437.10" y="102.20" width="1.4" height="0.8" fill="#e8380c" opacity="0.85"/>
<ellipse cx="436.00" cy="105.70" rx="1.45" ry="1.70" fill="#ffa41c"/>
<rect x="437.10" y="105.60" width="1.4" height="0.8" fill="#e8380c" opacity="0.85"/>
<rect x="450.56" y="51.40" width="3.3" height="11.40" rx="1.3" fill="#fff3d6" opacity="0.78"/>
<ellipse cx="453.06" cy="53.43" rx="1.45" ry="1.70" fill="#ffa41c"/>
<rect x="454.16" y="53.33" width="1.4" height="0.8" fill="#e8380c" opacity="0.85"/>
<ellipse cx="453.06" cy="57.10" rx="1.45" ry="1.70" fill="#ffa41c"/>
<rect x="454.16" y="57.00" width="1.4" height="0.8" fill="#e8380c" opacity="0.85"/>
<ellipse cx="453.06" cy="60.77" rx="1.45" ry="1.70" fill="#ffa41c"/>
<rect x="454.16" y="60.67" width="1.4" height="0.8" fill="#e8380c" opacity="0.85"/>
<rect x="450.56" y="70.40" width="3.3" height="1.60" rx="1.3" fill="#fff3d6" opacity="0.78"/>
<ellipse cx="453.06" cy="71.20" rx="1.45" ry="0.60" fill="#ffa41c"/>
<rect x="454.16" y="71.10" width="1.4" height="0.8" fill="#e8380c" opacity="0.85"/>
<rect x="467.62" y="44.80" width="3.3" height="9.40" rx="1.3" fill="#fff3d6" opacity="0.78"/>
<ellipse cx="470.12" cy="46.50" rx="1.45" ry="1.50" fill="#ffa41c"/>
<rect x="471.22" y="46.40" width="1.4" height="0.8" fill="#e8380c" opacity="0.85"/>
<ellipse cx="470.12" cy="49.50" rx="1.45" ry="1.50" fill="#ffa41c"/>
<rect x="471.22" y="49.40" width="1.4" height="0.8" fill="#e8380c" opacity="0.85"/>
<ellipse cx="470.12" cy="52.50" rx="1.45" ry="1.50" fill="#ffa41c"/>
<rect x="471.22" y="52.40" width="1.4" height="0.8" fill="#e8380c" opacity="0.85"/>
<rect x="484.68" y="95.80" width="3.3" height="1.80" rx="1.3" fill="#eefff0" opacity="0.78"/>
<ellipse cx="487.18" cy="96.70" rx="1.45" ry="0.70" fill="#19d92d"/>
<rect x="488.28" y="96.60" width="1.4" height="0.8" fill="#e8380c" opacity="0.85"/>
<rect x="501.74" y="82.80" width="3.3" height="7.40" rx="1.3" fill="#eefff0" opacity="0.78"/>
<ellipse cx="504.24" cy="84.75" rx="1.45" ry="1.70" fill="#19d92d"/>
<rect x="505.34" y="84.65" width="1.4" height="0.8" fill="#e8380c" opacity="0.85"/>
<ellipse cx="504.24" cy="88.25" rx="1.45" ry="1.70" fill="#19d92d"/>
<rect x="505.34" y="88.15" width="1.4" height="0.8" fill="#e8380c" opacity="0.85"/>
<rect x="501.74" y="96.80" width="3.3" height="9.80" rx="1.3" fill="#eefff0" opacity="0.78"/>
<ellipse cx="504.24" cy="98.57" rx="1.45" ry="1.57" fill="#19d92d"/>
<rect x="505.34" y="98.47" width="1.4" height="0.8" fill="#e8380c" opacity="0.85"/>
<ellipse cx="504.24" cy="101.70" rx="1.45" ry="1.57" fill="#19d92d"/>
<rect x="505.34" y="101.60" width="1.4" height="0.8" fill="#e8380c" opacity="0.85"/>
<ellipse cx="504.24" cy="104.83" rx="1.45" ry="1.57" fill="#19d92d"/>
<rect x="505.34" y="104.73" width="1.4" height="0.8" fill="#e8380c" opacity="0.85"/>
<rect x="518.80" y="54.40" width="3.3" height="23.40" rx="1.3" fill="#fff3d6" opacity="0.78"/>
<ellipse cx="521.30" cy="56.24" rx="1.45" ry="1.64" fill="#ffa41c"/>
<rect x="522.40" y="56.14" width="1.4" height="0.8" fill="#e8380c" opacity="0.85"/>
<ellipse cx="521.30" cy="59.53" rx="1.45" ry="1.64" fill="#ffa41c"/>
<rect x="522.40" y="59.43" width="1.4" height="0.8" fill="#e8380c" opacity="0.85"/>
<ellipse cx="521.30" cy="62.81" rx="1.45" ry="1.64" fill="#ffa41c"/>
<rect x="522.40" y="62.71" width="1.4" height="0.8" fill="#e8380c" opacity="0.85"/>
<ellipse cx="521.30" cy="66.10" rx="1.45" ry="1.64" fill="#ffa41c"/>
<rect x="522.40" y="66.00" width="1.4" height="0.8" fill="#e8380c" opacity="0.85"/>
<ellipse cx="521.30" cy="69.39" rx="1.45" ry="1.64" fill="#ffa41c"/>
<rect x="522.40" y="69.29" width="1.4" height="0.8" fill="#e8380c" opacity="0.85"/>
<ellipse cx="521.30" cy="72.67" rx="1.45" ry="1.64" fill="#ffa41c"/>
<rect x="522.40" y="72.57" width="1.4" height="0.8" fill="#e8380c" opacity="0.85"/>
<ellipse cx="521.30" cy="75.96" rx="1.45" ry="1.64" fill="#ffa41c"/>
<rect x="522.40" y="75.86" width="1.4" height="0.8" fill="#e8380c" opacity="0.85"/>
<rect x="638.22" y="55.20" width="3.3" height="14.60" rx="1.3" fill="#fff3d6" opacity="0.78"/>
<ellipse cx="640.72" cy="57.17" rx="1.45" ry="1.70" fill="#ffa41c"/>
<rect x="641.82" y="57.07" width="1.4" height="0.8" fill="#e8380c" opacity="0.85"/>
<ellipse cx="640.72" cy="60.72" rx="1.45" ry="1.70" fill="#ffa41c"/>
<rect x="641.82" y="60.62" width="1.4" height="0.8" fill="#e8380c" opacity="0.85"/>
<ellipse cx="640.72" cy="64.28" rx="1.45" ry="1.70" fill="#ffa41c"/>
<rect x="641.82" y="64.18" width="1.4" height="0.8" fill="#e8380c" opacity="0.85"/>
<ellipse cx="640.72" cy="67.83" rx="1.45" ry="1.70" fill="#ffa41c"/>
<rect x="641.82" y="67.73" width="1.4" height="0.8" fill="#e8380c" opacity="0.85"/>
<rect x="655.28" y="88.20" width="3.3" height="6.00" rx="1.3" fill="#eefff0" opacity="0.78"/>
<ellipse cx="657.78" cy="89.80" rx="1.45" ry="1.40" fill="#19d92d"/>
<rect x="658.88" y="89.70" width="1.4" height="0.8" fill="#e8380c" opacity="0.85"/>
<ellipse cx="657.78" cy="92.60" rx="1.45" ry="1.40" fill="#19d92d"/>
<rect x="658.88" y="92.50" width="1.4" height="0.8" fill="#e8380c" opacity="0.85"/>
<rect x="8.2" y="98.90" width="4.2" height="1.4" fill="#064806"/>
<rect x="8.2" y="107.80" width="4.2" height="1.2" fill="#10c818"/>
<rect x="8.2" y="109.90" width="4.2" height="2" fill="#2050ff"/>
<rect x="8.2" y="112.20" width="4.2" height="1.6" fill="#30f040"/>
<rect x="76.6" y="61.20" width="4.2" height="2" fill="#0a7a0a"/>
<rect x="76.6" y="64.60" width="4.2" height="1.6" fill="#1030d0"/>
<rect x="76.6" y="67.50" width="4.2" height="1.8" fill="#20c8a0"/>
<rect x="76.6" y="70.50" width="4.2" height="1.4" fill="#2050ff"/>
<rect x="76.6" y="72.70" width="4.2" height="1.4" fill="#1030d0"/>
<rect x="76.6" y="75.00" width="4.2" height="1.6" fill="#10c818"/>
<rect x="76.6" y="77.20" width="4.2" height="1.6" fill="#10c818"/>
<rect x="76.6" y="79.60" width="4.2" height="1.2" fill="#0a2a80"/>
<rect x="94" y="64.80" width="4.2" height="1" fill="#064806"/>
<rect x="94" y="74.30" width="4.2" height="1.4" fill="#183a90"/>
<rect x="94" y="75.90" width="4.2" height="1" fill="#0a7a0a"/>
<rect x="94" y="78.20" width="4.2" height="1.6" fill="#0a7a0a"/>
<rect x="94" y="80.40" width="4.2" height="1.6" fill="#10c818"/>
<rect x="94" y="82.70" width="4.2" height="1.4" fill="#10c818"/>
<rect x="94" y="84.80" width="4.2" height="1.2" fill="#10c818"/>
<rect x="94" y="86.50" width="4.2" height="1.8" fill="#30f040"/>
<rect x="94" y="89.20" width="4.2" height="1.2" fill="#10c818"/>
<rect x="94" y="94.70" width="4.2" height="1.4" fill="#30f040"/>
<rect x="94" y="98.30" width="4.2" height="1.4" fill="#064806"/>
<rect x="128" y="93.70" width="4.2" height="1" fill="#0a7a0a"/>
<rect x="128" y="96.20" width="4.2" height="1" fill="#064806"/>
<rect x="128" y="98.60" width="4.2" height="1.4" fill="#0a7a0a"/>
<rect x="128" y="101.00" width="4.2" height="2" fill="#30e880"/>
<rect x="128" y="103.90" width="4.2" height="1.6" fill="#1880c0"/>
<rect x="128" y="106.60" width="4.2" height="1.2" fill="#10c818"/>
<rect x="145" y="92.90" width="4.2" height="1" fill="#0a7a0a"/>
<rect x="145" y="96.70" width="4.2" height="1" fill="#0a7a0a"/>
<rect x="145" y="99.00" width="4.2" height="1" fill="#064806"/>
<rect x="145" y="101.90" width="4.2" height="1.6" fill="#064806"/>
<rect x="145" y="104.00" width="4.2" height="1.6" fill="#20c8a0"/>
<rect x="145" y="106.00" width="4.2" height="2" fill="#2050ff"/>
<rect x="145" y="110.10" width="4.2" height="1" fill="#10c818"/>
<rect x="418" y="193.30" width="4.2" height="1.4" fill="#ffa010"/>
<rect x="418" y="196.80" width="4.2" height="1.6" fill="#b87818"/>
<rect x="418" y="198.90" width="4.2" height="1.8" fill="#b87818"/>
<rect x="418" y="201.20" width="4.2" height="1.6" fill="#ffa010"/>
<rect x="418" y="203.10" width="4.2" height="1.6" fill="#2028e0"/>
<rect x="418" y="205.00" width="4.2" height="1.2" fill="#ffa010"/>
<rect x="418" y="206.30" width="4.2" height="1.4" fill="#2028e0"/>
<rect x="418" y="208.00" width="4.2" height="2" fill="#b87818"/>
<rect x="418" y="210.40" width="4.2" height="1.6" fill="#6a4810"/>
<rect x="418" y="213.20" width="4.2" height="1.2" fill="#101890"/>
<rect x="418" y="214.80" width="4.2" height="1.2" fill="#6a4810"/>
<rect x="435" y="150.50" width="4.2" height="1.4" fill="#ffa010"/>
<rect x="435" y="154.90" width="4.2" height="1.4" fill="#ffa010"/>
<rect x="435" y="156.60" width="4.2" height="1.2" fill="#b87818"/>
<rect x="435" y="158.10" width="4.2" height="1.4" fill="#2028e0"/>
<rect x="435" y="159.80" width="4.2" height="1.6" fill="#a090e0"/>
<rect x="435" y="161.90" width="4.2" height="1.4" fill="#6a4810"/>
<rect x="435" y="163.80" width="4.2" height="1.2" fill="#b87818"/>
<rect x="435" y="165.00" width="4.2" height="1.6" fill="#ffa010"/>
<rect x="435" y="166.90" width="4.2" height="1.4" fill="#a090e0"/>
<rect x="435" y="169.00" width="4.2" height="1.2" fill="#ffa010"/>
<rect x="435" y="170.90" width="4.2" height="1.4" fill="#a090e0"/>
<rect x="435" y="172.60" width="4.2" height="1.2" fill="#b87818"/>
<rect x="435" y="174.20" width="4.2" height="1.2" fill="#a090e0"/>
<rect x="435" y="175.50" width="4.2" height="1" fill="#6a4810"/>
<rect x="435" y="177.00" width="4.2" height="1.2" fill="#a090e0"/>
<rect x="435" y="189.90" width="4.2" height="1.4" fill="#5060e0"/>
<rect x="435" y="196.30" width="4.2" height="1.4" fill="#ffa010"/>
<rect x="435" y="199.00" width="4.2" height="1.4" fill="#ffa010"/>
<rect x="435" y="201.80" width="4.2" height="1.2" fill="#101890"/>
<rect x="452" y="151.50" width="4.2" height="3" fill="#6a4810"/>
<rect x="452" y="157.70" width="4.2" height="1.4" fill="#5060e0"/>
<rect x="452" y="163.90" width="4.2" height="1" fill="#ffa010"/>
<rect x="452" y="169.80" width="4.2" height="1.2" fill="#b87818"/>
<rect x="469.2" y="144.40" width="4.2" height="1.6" fill="#6a4810"/>
<rect x="469.2" y="146.90" width="4.2" height="1.4" fill="#a090e0"/>
<rect x="469.2" y="148.80" width="4.2" height="1.2" fill="#6a4810"/>
<rect x="469.2" y="155.90" width="4.2" height="1" fill="#ffa010"/>
<rect x="520.4" y="154.00" width="4.2" height="1.2" fill="#6a4810"/>
<rect x="520.4" y="158.90" width="4.2" height="1" fill="#ffa010"/>
<rect x="520.4" y="162.50" width="4.2" height="1.8" fill="#4048f0"/>
<rect x="520.4" y="169.00" width="4.2" height="1.2" fill="#ffa010"/>
<rect x="520.4" y="171.80" width="4.2" height="1.2" fill="#2028e0"/>
<rect x="520.4" y="174.30" width="4.2" height="1.4" fill="#6a4810"/>
<rect x="520.4" y="176.80" width="4.2" height="1.2" fill="#6a4810"/>
<rect x="639.9" y="155.10" width="4.1" height="1.4" fill="#101890"/>
<rect x="639.9" y="156.90" width="4.1" height="1.2" fill="#b07810"/>
<rect x="639.9" y="160.90" width="4.1" height="1.6" fill="#101890"/>
<rect x="639.9" y="164.80" width="4.1" height="1.2" fill="#b07810"/>
<rect x="639.9" y="168.00" width="4.1" height="1.2" fill="#a06c10"/>
<rect x="213.1" y="64.20" width="4.2" height="1.6" fill="#30f040"/>
<rect x="213.1" y="66.40" width="4.2" height="1.6" fill="#20d090"/>
<rect x="213.1" y="68.40" width="4.2" height="1.8" fill="#10c818"/>
<rect x="213.1" y="73.20" width="4.2" height="1.2" fill="#0a7a0a"/>
<rect x="230" y="70.40" width="4.2" height="1.2" fill="#0a7a0a"/>
<rect x="230" y="78.20" width="4.2" height="2.8" fill="#1890c8"/>
<rect x="246.9" y="75.70" width="4.2" height="1" fill="#0a7a0a"/>
<rect x="246.9" y="77.90" width="4.2" height="1.2" fill="#10c818"/>
<rect x="246.9" y="79.80" width="4.2" height="1.6" fill="#30f040"/>
<rect x="298.4" y="62.10" width="4.2" height="1" fill="#10c818"/>
<rect x="298.4" y="63.00" width="4.2" height="1.2" fill="#2050ff"/>
<rect x="298.4" y="64.20" width="4.2" height="1" fill="#10c818"/>
<rect x="315.3" y="59.20" width="4.2" height="1.2" fill="#0a7a0a"/>
<rect x="315.3" y="66.80" width="4.2" height="1.2" fill="#1030d0"/>
<rect x="315.3" y="68.90" width="4.2" height="1.6" fill="#10c818"/>
<rect x="315.3" y="70.90" width="4.2" height="1.4" fill="#20d890"/>
<rect x="315.3" y="73.00" width="4.2" height="1.6" fill="#10c818"/>
<rect x="315.3" y="75.10" width="4.2" height="1.2" fill="#064806"/>
<rect x="332.8" y="63.40" width="4.2" height="1.2" fill="#0a7a0a"/>
<rect x="332.8" y="70.30" width="4.2" height="1.4" fill="#101890"/>
<rect x="417.4" y="230.2" width="3.4" height="1.2" fill="#6030c0"/>
<line x1="0" y1="236" x2="800" y2="236" stroke="#c8c8c8" stroke-width="0.9"/>
<line x1="-6.70" y1="235.8" x2="-6.70" y2="238" stroke="#d8d8d8" stroke-width="0.8"/>
<text x="-7.30" y="243.3" font-size="5.6" textLength="29" lengthAdjust="spacingAndGlyphs" font-family="Liberation Sans, sans-serif" fill="#dcdcdc">20 Apr 16:45</text>
<line x1="27.40" y1="235.8" x2="27.40" y2="238" stroke="#d8d8d8" stroke-width="0.8"/>
<text x="26.80" y="243.3" font-size="5.6" textLength="29" lengthAdjust="spacingAndGlyphs" font-family="Liberation Sans, sans-serif" fill="#dcdcdc">20 Apr 17:15</text>
<line x1="61.50" y1="235.8" x2="61.50" y2="238" stroke="#d8d8d8" stroke-width="0.8"/>
<text x="60.90" y="243.3" font-size="5.6" textLength="29" lengthAdjust="spacingAndGlyphs" font-family="Liberation Sans, sans-serif" fill="#dcdcdc">20 Apr 17:45</text>
<line x1="95.60" y1="235.8" x2="95.60" y2="238" stroke="#d8d8d8" stroke-width="0.8"/>
<text x="95.00" y="243.3" font-size="5.6" textLength="29" lengthAdjust="spacingAndGlyphs" font-family="Liberation Sans, sans-serif" fill="#dcdcdc">20 Apr 18:15</text>
<line x1="129.70" y1="235.8" x2="129.70" y2="238" stroke="#d8d8d8" stroke-width="0.8"/>
<text x="129.10" y="243.3" font-size="5.6" textLength="29" lengthAdjust="spacingAndGlyphs" font-family="Liberation Sans, sans-serif" fill="#dcdcdc">20 Apr 18:45</text>
<line x1="163.80" y1="235.8" x2="163.80" y2="238" stroke="#d8d8d8" stroke-width="0.8"/>
<text x="163.20" y="243.3" font-size="5.6" textLength="29" lengthAdjust="spacingAndGlyphs" font-family="Liberation Sans, sans-serif" fill="#dcdcdc">20 Apr 19:15</text>
<line x1="197.90" y1="235.8" x2="197.90" y2="238" stroke="#d8d8d8" stroke-width="0.8"/>
<text x="197.30" y="243.3" font-size="5.6" textLength="29" lengthAdjust="spacingAndGlyphs" font-family="Liberation Sans, sans-serif" fill="#dcdcdc">20 Apr 19:45</text>
<line x1="232.00" y1="235.8" x2="232.00" y2="238" stroke="#d8d8d8" stroke-width="0.8"/>
<text x="231.40" y="243.3" font-size="5.6" textLength="29" lengthAdjust="spacingAndGlyphs" font-family="Liberation Sans, sans-serif" fill="#dcdcdc">20 Apr 20:15</text>
<line x1="266.10" y1="235.8" x2="266.10" y2="238" stroke="#d8d8d8" stroke-width="0.8"/>
<text x="265.50" y="243.3" font-size="5.6" textLength="29" lengthAdjust="spacingAndGlyphs" font-family="Liberation Sans, sans-serif" fill="#dcdcdc">20 Apr 20:45</text>
<line x1="300.20" y1="235.8" x2="300.20" y2="238" stroke="#d8d8d8" stroke-width="0.8"/>
<text x="299.60" y="243.3" font-size="5.6" textLength="29" lengthAdjust="spacingAndGlyphs" font-family="Liberation Sans, sans-serif" fill="#dcdcdc">20 Apr 21:15</text>
<line x1="334.30" y1="235.8" x2="334.30" y2="238" stroke="#d8d8d8" stroke-width="0.8"/>
<text x="333.70" y="243.3" font-size="5.6" textLength="29" lengthAdjust="spacingAndGlyphs" font-family="Liberation Sans, sans-serif" fill="#dcdcdc">20 Apr 21:45</text>
<line x1="368.40" y1="235.8" x2="368.40" y2="238" stroke="#d8d8d8" stroke-width="0.8"/>
<text x="367.80" y="243.3" font-size="5.6" textLength="29" lengthAdjust="spacingAndGlyphs" font-family="Liberation Sans, sans-serif" fill="#dcdcdc">20 Apr 22:15</text>
<line x1="402.50" y1="235.8" x2="402.50" y2="238" stroke="#d8d8d8" stroke-width="0.8"/>
<text x="401.90" y="243.3" font-size="5.6" textLength="29" lengthAdjust="spacingAndGlyphs" font-family="Liberation Sans, sans-serif" fill="#dcdcdc">20 Apr 22:45</text>
<line x1="436.60" y1="235.8" x2="436.60" y2="238" stroke="#d8d8d8" stroke-width="0.8"/>
<text x="436.00" y="243.3" font-size="5.6" textLength="29" lengthAdjust="spacingAndGlyphs" font-family="Liberation Sans, sans-serif" fill="#dcdcdc">20 Apr 23:15</text>
<line x1="470.70" y1="235.8" x2="470.70" y2="238" stroke="#d8d8d8" stroke-width="0.8"/>
<text x="470.10" y="243.3" font-size="5.6" textLength="29" lengthAdjust="spacingAndGlyphs" font-family="Liberation Sans, sans-serif" fill="#dcdcdc">20 Apr 23:45</text>
<line x1="504.80" y1="235.8" x2="504.80" y2="238" stroke="#d8d8d8" stroke-width="0.8"/>
<text x="504.20" y="243.3" font-size="5.6" textLength="29" lengthAdjust="spacingAndGlyphs" font-family="Liberation Sans, sans-serif" fill="#dcdcdc">21 Apr 00:15</text>
<line x1="538.90" y1="235.8" x2="538.90" y2="238" stroke="#d8d8d8" stroke-width="0.8"/>
<text x="538.30" y="243.3" font-size="5.6" textLength="29" lengthAdjust="spacingAndGlyphs" font-family="Liberation Sans, sans-serif" fill="#dcdcdc">21 Apr 00:45</text>
<line x1="573.00" y1="235.8" x2="573.00" y2="238" stroke="#d8d8d8" stroke-width="0.8"/>
<text x="572.40" y="243.3" font-size="5.6" textLength="29" lengthAdjust="spacingAndGlyphs" font-family="Liberation Sans, sans-serif" fill="#dcdcdc">21 Apr 01:15</text>
<line x1="607.10" y1="235.8" x2="607.10" y2="238" stroke="#d8d8d8" stroke-width="0.8"/>
<text x="606.50" y="243.3" font-size="5.6" textLength="29" lengthAdjust="spacingAndGlyphs" font-family="Liberation Sans, sans-serif" fill="#dcdcdc">21 Apr 01:45</text>
<line x1="641.20" y1="235.8" x2="641.20" y2="238" stroke="#d8d8d8" stroke-width="0.8"/>
<text x="640.60" y="243.3" font-size="5.6" textLength="29" lengthAdjust="spacingAndGlyphs" font-family="Liberation Sans, sans-serif" fill="#dcdcdc">21 Apr 02:15</text>
<text x="-2.2" y="36.5" font-size="5.7" textLength="24.4" lengthAdjust="spacingAndGlyphs" font-family="Liberation Sans, sans-serif" fill="#e4e4e4">0 84973.20</text>
<path d="M681.4 30.4h6l-3 3.2z" fill="#8fa3b8"/>
</svg>
<div id="tbl">
<div class="h" style="left:0px;width:84.90px"><span>Time</span></div>
<div class="h" style="left:84.4px;width:54.50px"><span>Type</span></div>
<div class="h" style="left:138.4px;width:43.10px"><span>Size</span></div>
<div class="h" style="left:181.0px;width:54.70px"><span>Symbol</span></div>
<div class="h" style="left:235.2px;width:54.30px"><span>Price</span></div>
<div class="h" style="left:289.0px;width:53.90px"><span>S / L</span></div>
<div class="h" style="left:342.4px;width:54.40px"><span>T / P</span></div>
<div class="h" style="left:396.3px;width:118.50px"><span>Time</span></div>
<div class="h" style="left:514.3px;width:54.60px"><span>Price</span></div>
<div class="h" style="left:568.4px;width:54.70px;padding-right:8.6px;text-align:left;padding-left:5px"><span style="transform-origin:0 50%;letter-spacing:0.32px">Commission</span></div>
<svg class="abs" style="left:614.40px;top:5.6px" width="4" height="4" viewBox="0 0 4 4"><path d="M0.4 0.6h3.2l-1.6 2.6z" fill="none" stroke="#aaa" stroke-width="0.5"/></svg>
<div class="h" style="left:622.6px;width:54.70px"><span>Swap</span></div>
<div class="h" style="left:676.8px;width:59.50px"><span>Profit</span></div>
</div>
<div class="row g" style="top:274.500px">
<div class="sl" style="left:289.20px;width:52.00px"></div>
<div class="c" style="left:0px;width:84.00px"><span>2025.04.20 23:08:43</span></div>
<div class="c t" style="left:84.4px;width:53.60px"><span>sell</span></div>
<div class="c" style="left:138.4px;width:42.20px"><span>80.36</span></div>
<div class="c t" style="left:181.0px;width:53.80px"><span>btcusdp</span></div>
<div class="c" style="left:235.2px;width:53.40px"><span>84875.80</span></div>
<div class="c slc" style="left:289.0px;width:53.00px"><span>84877.00</span></div>
<div class="c" style="left:342.4px;width:53.50px"><span>84273.19</span></div>
<div class="c" style="left:396.3px;width:117.60px"><span>2025.04.20 23:08:57</span></div>
<div class="c" style="left:514.3px;width:53.70px"><span>84877.00</span></div>
<div class="c" style="left:568.4px;width:53.80px"><span>-321.44</span></div>
<div class="c" style="left:622.6px;width:53.80px"><span>0.00</span></div>
<div class="c" style="left:676.8px;width:58.60px"><span>-96.43</span></div>
</div>
<div class="row sel" style="top:285.167px">
<div class="sl" style="left:289.20px;width:52.00px"></div>
<div class="c" style="left:0px;width:84.00px"><span>2025.04.20 23:09:44</span></div>
<div class="c t" style="left:84.4px;width:53.60px"><span>sell</span></div>
<div class="c" style="left:138.4px;width:42.20px"><span>80.48</span></div>
<div class="c t" style="left:181.0px;width:53.80px"><span>btcusdp</span></div>
<div class="c" style="left:235.2px;width:53.40px"><span>84886.00</span></div>
<div class="c slc" style="left:289.0px;width:53.00px"><span>84873.00</span></div>
<div class="c" style="left:342.4px;width:53.50px"><span>84269.19</span></div>
<div class="c" style="left:396.3px;width:117.60px"><span>2025.04.20 23:09:50</span></div>
<div class="c" style="left:514.3px;width:53.70px"><span>84873.00</span></div>
<div class="c" style="left:568.4px;width:53.80px"><span>-321.92</span></div>
<div class="c" style="left:622.6px;width:53.80px"><span>0.00</span></div>
<div class="c" style="left:676.8px;width:58.60px"><span>1 046.24</span></div>
</div>
<div class="row g" style="top:295.834px">
<div class="sl" style="left:289.20px;width:52.00px"></div>
<div class="c" style="left:0px;width:84.00px"><span>2025.04.20 23:10:19</span></div>
<div class="c t" style="left:84.4px;width:53.60px"><span>sell</span></div>
<div class="c" style="left:138.4px;width:42.20px"><span>80.52</span></div>
<div class="c t" style="left:181.0px;width:53.80px"><span>btcusdp</span></div>
<div class="c" style="left:235.2px;width:53.40px"><span>84867.90</span></div>
<div class="c slc" style="left:289.0px;width:53.00px"><span>84846.30</span></div>
<div class="c" style="left:342.4px;width:53.50px"><span>84242.49</span></div>
<div class="c" style="left:396.3px;width:117.60px"><span>2025.04.20 23:10:41</span></div>
<div class="c" style="left:514.3px;width:53.70px"><span>84846.30</span></div>
<div class="c" style="left:568.4px;width:53.80px"><span>-322.08</span></div>
<div class="c" style="left:622.6px;width:53.80px"><span>0.00</span></div>
<div class="c" style="left:676.8px;width:58.60px"><span>1 739.23</span></div>
</div>
<div class="row" style="top:306.501px">
<div class="sl" style="left:289.20px;width:52.00px"></div>
<div class="c" style="left:0px;width:84.00px"><span>2025.04.20 23:10:05</span></div>
<div class="c t" style="left:84.4px;width:53.60px"><span>sell</span></div>
<div class="c" style="left:138.4px;width:42.20px"><span>80.55</span></div>
<div class="c t" style="left:181.0px;width:53.80px"><span>btcusdp</span></div>
<div class="c" style="left:235.2px;width:53.40px"><span>84880.20</span></div>
<div class="c slc" style="left:289.0px;width:53.00px"><span>84880.00</span></div>
<div class="c" style="left:342.4px;width:53.50px"><span>84276.19</span></div>
<div class="c" style="left:396.3px;width:117.60px"><span>2025.04.20 23:10:06</span></div>
<div class="c" style="left:514.3px;width:53.70px"><span>84880.00</span></div>
<div class="c" style="left:568.4px;width:53.80px"><span>-322.20</span></div>
<div class="c" style="left:622.6px;width:53.80px"><span>0.00</span></div>
<div class="c" style="left:676.8px;width:58.60px"><span>16.11</span></div>
</div>
<div class="row g" style="top:317.168px">
<div class="sl" style="left:289.20px;width:52.00px"></div>
<div class="c" style="left:0px;width:84.00px"><span>2025.04.20 23:11:06</span></div>
<div class="c t" style="left:84.4px;width:53.60px"><span>sell</span></div>
<div class="c" style="left:138.4px;width:42.20px"><span>80.66</span></div>
<div class="c t" style="left:181.0px;width:53.80px"><span>btcusdp</span></div>
<div class="c" style="left:235.2px;width:53.40px"><span>84873.70</span></div>
<div class="c slc" style="left:289.0px;width:53.00px"><span>84821.60</span></div>
<div class="c" style="left:342.4px;width:53.50px"><span>84217.79</span></div>
<div class="c" style="left:396.3px;width:117.60px"><span>2025.04.20 23:12:42</span></div>
<div class="c" style="left:514.3px;width:53.70px"><span>84821.60</span></div>
<div class="c" style="left:568.4px;width:53.80px"><span>-322.64</span></div>
<div class="c" style="left:622.6px;width:53.80px"><span>0.00</span></div>
<div class="c" style="left:676.8px;width:58.60px"><span>4 202.39</span></div>
</div>
<div class="row" style="top:327.835px">
<div class="sl" style="left:289.20px;width:52.00px"></div>
<div class="c" style="left:0px;width:84.00px"><span>2025.04.20 23:20:11</span></div>
<div class="c t" style="left:84.4px;width:53.60px"><span>sell</span></div>
<div class="c" style="left:138.4px;width:42.20px"><span>80.90</span></div>
<div class="c t" style="left:181.0px;width:53.80px"><span>btcusdp</span></div>
<div class="c" style="left:235.2px;width:53.40px"><span>85143.40</span></div>
<div class="c slc" style="left:289.0px;width:53.00px"><span>85133.50</span></div>
<div class="c" style="left:342.4px;width:53.50px"><span>84529.69</span></div>
<div class="c" style="left:396.3px;width:117.60px"><span>2025.04.20 23:20:13</span></div>
<div class="c" style="left:514.3px;width:53.70px"><span>85133.50</span></div>
<div class="c" style="left:568.4px;width:53.80px"><span>-323.60</span></div>
<div class="c" style="left:622.6px;width:53.80px"><span>0.00</span></div>
<div class="c" style="left:676.8px;width:58.60px"><span>800.91</span></div>
</div>
<div class="row g" style="top:338.502px">
<div class="sl" style="left:289.20px;width:52.00px"></div>
<div class="c" style="left:0px;width:84.00px"><span>2025.04.20 23:19:53</span></div>
<div class="c t" style="left:84.4px;width:53.60px"><span>sell</span></div>
<div class="c" style="left:138.4px;width:42.20px"><span>80.90</span></div>
<div class="c t" style="left:181.0px;width:53.80px"><span>btcusdp</span></div>
<div class="c" style="left:235.2px;width:53.40px"><span>85162.40</span></div>
<div class="c slc" style="left:289.0px;width:53.00px"><span>85155.50</span></div>
<div class="c" style="left:342.4px;width:53.50px"><span>84551.69</span></div>
<div class="c" style="left:396.3px;width:117.60px"><span>2025.04.20 23:19:54</span></div>
<div class="c" style="left:514.3px;width:53.70px"><span>85155.50</span></div>
<div class="c" style="left:568.4px;width:53.80px"><span>-323.60</span></div>
<div class="c" style="left:622.6px;width:53.80px"><span>0.00</span></div>
<div class="c" style="left:676.8px;width:58.60px"><span>558.21</span></div>
</div>
<div class="row" style="top:349.169px">
<div class="sl" style="left:289.20px;width:52.00px"></div>
<div class="c" style="left:0px;width:84.00px"><span>2025.04.20 23:19:55</span></div>
<div class="c t" style="left:84.4px;width:53.60px"><span>sell</span></div>
<div class="c" style="left:138.4px;width:42.20px"><span>80.92</span></div>
<div class="c t" style="left:181.0px;width:53.80px"><span>btcusdp</span></div>
<div class="c" style="left:235.2px;width:53.40px"><span>85166.50</span></div>
<div class="c slc" style="left:289.0px;width:53.00px"><span>85157.30</span></div>
<div class="c" style="left:342.4px;width:53.50px"><span>84553.49</span></div>
<div class="c" style="left:396.3px;width:117.60px"><span>2025.04.20 23:20:01</span></div>
<div class="c" style="left:514.3px;width:53.70px"><span>85157.30</span></div>
<div class="c" style="left:568.4px;width:53.80px"><span>-323.68</span></div>
<div class="c" style="left:622.6px;width:53.80px"><span>0.00</span></div>
<div class="c" style="left:676.8px;width:58.60px"><span>744.46</span></div>
</div>
<div class="row g" style="top:359.836px">
<div class="sl" style="left:289.20px;width:52.00px"></div>
<div class="c" style="left:0px;width:84.00px"><span>2025.04.20 23:20:15</span></div>
<div class="c t" style="left:84.4px;width:53.60px"><span>sell</span></div>
<div class="c" style="left:138.4px;width:42.20px"><span>80.95</span></div>
<div class="c t" style="left:181.0px;width:53.80px"><span>btcusdp</span></div>
<div class="c" style="left:235.2px;width:53.40px"><span>85131.50</span></div>
<div class="c slc" style="left:289.0px;width:53.00px"><span>85124.80</span></div>
<div class="c" style="left:342.4px;width:53.50px"><span>84520.99</span></div>
<div class="c" style="left:396.3px;width:117.60px"><span>2025.04.20 23:20:17</span></div>
<div class="c" style="left:514.3px;width:53.70px"><span>85124.80</span></div>
<div class="c" style="left:568.4px;width:53.80px"><span>-323.80</span></div>
<div class="c" style="left:622.6px;width:53.80px"><span>0.00</span></div>
<div class="c" style="left:676.8px;width:58.60px"><span>542.37</span></div>
</div>
<div class="row" style="top:370.503px">
<div class="sl" style="left:289.20px;width:52.00px"></div>
<div class="c" style="left:0px;width:84.00px"><span>2025.04.20 23:20:06</span></div>
<div class="c t" style="left:84.4px;width:53.60px"><span>sell</span></div>
<div class="c" style="left:138.4px;width:42.20px"><span>80.96</span></div>
<div class="c t" style="left:181.0px;width:53.80px"><span>btcusdp</span></div>
<div class="c" style="left:235.2px;width:53.40px"><span>85154.20</span></div>
<div class="c slc" style="left:289.0px;width:53.00px"><span>85158.00</span></div>
<div class="c" style="left:342.4px;width:53.50px"><span>84554.19</span></div>
<div class="c" style="left:396.3px;width:117.60px"><span>2025.04.20 23:20:07</span></div>
<div class="c" style="left:514.3px;width:53.70px"><span>85158.00</span></div>
<div class="c" style="left:568.4px;width:53.80px"><span>-323.84</span></div>
<div class="c" style="left:622.6px;width:53.80px"><span>0.00</span></div>
<div class="c" style="left:676.8px;width:58.60px"><span>-307.65</span></div>
</div>
<div class="row g" style="top:381.170px">
<div class="sl" style="left:289.20px;width:52.00px"></div>
<div class="c" style="left:0px;width:84.00px"><span>2025.04.20 23:19:43</span></div>
<div class="c t" style="left:84.4px;width:53.60px"><span>sell</span></div>
<div class="c" style="left:138.4px;width:42.20px"><span>80.96</span></div>
<div class="c t" style="left:181.0px;width:53.80px"><span>btcusdp</span></div>
<div class="c" style="left:235.2px;width:53.40px"><span>85108.50</span></div>
<div class="c slc" style="left:289.0px;width:53.00px"><span>85112.30</span></div>
<div class="c" style="left:342.4px;width:53.50px"><span>84508.49</span></div>
<div class="c" style="left:396.3px;width:117.60px"><span>2025.04.20 23:19:43</span></div>
<div class="c" style="left:514.3px;width:53.70px"><span>85112.30</span></div>
<div class="c" style="left:568.4px;width:53.80px"><span>-323.84</span></div>
<div class="c" style="left:622.6px;width:53.80px"><span>0.00</span></div>
<div class="c" style="left:676.8px;width:58.60px"><span>-307.65</span></div>
</div>
<div class="row" style="top:391.837px">
<div class="sl" style="left:289.20px;width:52.00px"></div>
<div class="c" style="left:0px;width:84.00px"><span>2025.04.20 23:20:37</span></div>
<div class="c t" style="left:84.4px;width:53.60px"><span>sell</span></div>
<div class="c" style="left:138.4px;width:42.20px"><span>80.97</span></div>
<div class="c t" style="left:181.0px;width:53.80px"><span>btcusdp</span></div>
<div class="c" style="left:235.2px;width:53.40px"><span>85123.80</span></div>
<div class="c slc" style="left:289.0px;width:53.00px"><span>85050.70</span></div>
<div class="c" style="left:342.4px;width:53.50px"><span>84446.89</span></div>
<div class="c" style="left:396.3px;width:117.60px"><span>2025.04.20 23:20:50</span></div>
<div class="c" style="left:514.3px;width:53.70px"><span>85050.70</span></div>
<div class="c" style="left:568.4px;width:53.80px"><span>-323.88</span></div>
<div class="c" style="left:622.6px;width:53.80px"><span>0.00</span></div>
<div class="c" style="left:676.8px;width:58.60px"><span>5 918.91</span></div>
</div>
<div class="row g" style="top:402.504px">
<div class="sl" style="left:289.20px;width:52.00px"></div>
<div class="c" style="left:0px;width:84.00px"><span>2025.04.20 23:19:32</span></div>
<div class="c t" style="left:84.4px;width:53.60px"><span>sell</span></div>
<div class="c" style="left:138.4px;width:42.20px"><span>81.02</span></div>
<div class="c t" style="left:181.0px;width:53.80px"><span>btcusdp</span></div>
<div class="c" style="left:235.2px;width:53.40px"><span>85025.05</span></div>
<div class="c slc" style="left:289.0px;width:53.00px"><span>85028.85</span></div>
<div class="c" style="left:342.4px;width:53.50px"><span>84425.04</span></div>
<div class="c" style="left:396.3px;width:117.60px"><span>2025.04.20 23:19:32</span></div>
<div class="c" style="left:514.3px;width:53.70px"><span>85028.85</span></div>
<div class="c" style="left:568.4px;width:53.80px"><span>-324.08</span></div>
<div class="c" style="left:622.6px;width:53.80px"><span>0.00</span></div>
<div class="c" style="left:676.8px;width:58.60px"><span>-307.88</span></div>
</div>
<div class="row" style="top:413.171px">
<div class="sl" style="left:289.20px;width:52.00px"></div>
<div class="c" style="left:0px;width:84.00px"><span>2025.04.20 23:13:06</span></div>
<div class="c t" style="left:84.4px;width:53.60px"><span>sell</span></div>
<div class="c" style="left:138.4px;width:42.20px"><span>81.04</span></div>
<div class="c t" style="left:181.0px;width:53.80px"><span>btcusdp</span></div>
<div class="c" style="left:235.2px;width:53.40px"><span>84841.40</span></div>
<div class="c slc" style="left:289.0px;width:53.00px"><span>84829.80</span></div>
<div class="c" style="left:342.4px;width:53.50px"><span>84225.99</span></div>
<div class="c" style="left:396.3px;width:117.60px"><span>2025.04.20 23:13:26</span></div>
<div class="c" style="left:514.3px;width:53.70px"><span>84829.80</span></div>
<div class="c" style="left:568.4px;width:53.80px"><span>-324.16</span></div>
<div class="c" style="left:622.6px;width:53.80px"><span>0.00</span></div>
<div class="c" style="left:676.8px;width:58.60px"><span>940.06</span></div>
</div>
<div class="row g" style="top:423.838px">
<div class="sl" style="left:289.20px;width:52.00px"></div>
<div class="c" style="left:0px;width:84.00px"><span>2025.04.20 23:19:23</span></div>
<div class="c t" style="left:84.4px;width:53.60px"><span>sell</span></div>
<div class="c" style="left:138.4px;width:42.20px"><span>81.08</span></div>
<div class="c t" style="left:181.0px;width:53.80px"><span>btcusdp</span></div>
<div class="c" style="left:235.2px;width:53.40px"><span>84948.00</span></div>
<div class="c slc" style="left:289.0px;width:53.00px"><span>84951.80</span></div>
<div class="c" style="left:342.4px;width:53.50px"><span>84347.99</span></div>
<div class="c" style="left:396.3px;width:117.60px"><span>2025.04.20 23:19:25</span></div>
<div class="c" style="left:514.3px;width:53.70px"><span>84951.80</span></div>
<div class="c" style="left:568.4px;width:53.80px"><span>-324.32</span></div>
<div class="c" style="left:622.6px;width:53.80px"><span>0.00</span></div>
<div class="c" style="left:676.8px;width:58.60px"><span>-308.10</span></div>
</div>
<div class="row" style="top:434.505px">
<div class="sl" style="left:289.20px;width:52.00px"></div>
<div class="c" style="left:0px;width:84.00px"><span>2025.04.20 23:14:32</span></div>
<div class="c t" style="left:84.4px;width:53.60px"><span>sell</span></div>
<div class="c" style="left:138.4px;width:42.20px"><span>81.09</span></div>
<div class="c t" style="left:181.0px;width:53.80px"><span>btcusdp</span></div>
<div class="c" style="left:235.2px;width:53.40px"><span>84921.20</span></div>
<div class="c slc" style="left:289.0px;width:53.00px"><span>84908.90</span></div>
<div class="c" style="left:342.4px;width:53.50px"><span>84305.09</span></div>
<div class="c" style="left:396.3px;width:117.60px"><span>2025.04.20 23:15:02</span></div>
<div class="c" style="left:514.3px;width:53.70px"><span>84908.90</span></div>
<div class="c" style="left:568.4px;width:53.80px"><span>-324.36</span></div>
<div class="c" style="left:622.6px;width:53.80px"><span>0.00</span></div>
<div class="c" style="left:676.8px;width:58.60px"><span>997.41</span></div>
</div>
<div class="row g" style="top:445.172px">
<div class="sl" style="left:289.20px;width:52.00px"></div>
<div class="c" style="left:0px;width:84.00px"><span>2025.04.20 23:13:43</span></div>
<div class="c t" style="left:84.4px;width:53.60px"><span>sell</span></div>
<div class="c" style="left:138.4px;width:42.20px"><span>81.10</span></div>
<div class="c t" style="left:181.0px;width:53.80px"><span>btcusdp</span></div>
<div class="c" style="left:235.2px;width:53.40px"><span>84838.70</span></div>
<div class="c slc" style="left:289.0px;width:53.00px"><span>84835.90</span></div>
<div class="c" style="left:342.4px;width:53.50px"><span>84232.09</span></div>
<div class="c" style="left:396.3px;width:117.60px"><span>2025.04.20 23:14:06</span></div>
<div class="c" style="left:514.3px;width:53.70px"><span>84835.90</span></div>
<div class="c" style="left:568.4px;width:53.80px"><span>-324.40</span></div>
<div class="c" style="left:622.6px;width:53.80px"><span>0.00</span></div>
<div class="c" style="left:676.8px;width:58.60px"><span>227.08</span></div>
</div>
<div class="row" style="top:455.839px">
<div class="sl" style="left:289.20px;width:52.00px"></div>
<div class="c" style="left:0px;width:84.00px"><span>2025.04.20 23:19:17</span></div>
<div class="c t" style="left:84.4px;width:53.60px"><span>sell</span></div>
<div class="c" style="left:138.4px;width:42.20px"><span>81.14</span></div>
<div class="c t" style="left:181.0px;width:53.80px"><span>btcusdp</span></div>
<div class="c" style="left:235.2px;width:53.40px"><span>84906.00</span></div>
<div class="c slc" style="left:289.0px;width:53.00px"><span>84908.50</span></div>
<div class="c" style="left:342.4px;width:53.50px"><span>84304.69</span></div>
<div class="c" style="left:396.3px;width:117.60px"><span>2025.04.20 23:19:19</span></div>
<div class="c" style="left:514.3px;width:53.70px"><span>84908.50</span></div>
<div class="c" style="left:568.4px;width:53.80px"><span>-324.56</span></div>
<div class="c" style="left:622.6px;width:53.80px"><span>0.00</span></div>
<div class="c" style="left:676.8px;width:58.60px"><span>-202.85</span></div>
</div>
<div class="row g" style="top:466.506px">
<div class="sl" style="left:289.20px;width:52.00px"></div>
<div class="c" style="left:0px;width:84.00px"><span>2025.04.20 23:19:00</span></div>
<div class="c t" style="left:84.4px;width:53.60px"><span>sell</span></div>
<div class="c" style="left:138.4px;width:42.20px"><span>81.16</span></div>
<div class="c t" style="left:181.0px;width:53.80px"><span>btcusdp</span></div>
<div class="c" style="left:235.2px;width:53.40px"><span>84892.00</span></div>
<div class="c slc" style="left:289.0px;width:53.00px"><span>84891.10</span></div>
<div class="c" style="left:342.4px;width:53.50px"><span>84287.29</span></div>
<div class="c" style="left:396.3px;width:117.60px"><span>2025.04.20 23:19:02</span></div>
<div class="c" style="left:514.3px;width:53.70px"><span>84891.10</span></div>
<div class="c" style="left:568.4px;width:53.80px"><span>-324.64</span></div>
<div class="c" style="left:622.6px;width:53.80px"><span>0.00</span></div>
<div class="c" style="left:676.8px;width:58.60px"><span>73.04</span></div>
</div>
<div class="row" style="top:477.173px">
<div class="sl" style="left:289.20px;width:52.00px"></div>
<div class="c" style="left:0px;width:84.00px"><span>2025.04.20 23:21:15</span></div>
<div class="c t" style="left:84.4px;width:53.60px"><span>sell</span></div>
<div class="c" style="left:138.4px;width:42.20px"><span>81.46</span></div>
<div class="c t" style="left:181.0px;width:53.80px"><span>btcusdp</span></div>
<div class="c" style="left:235.2px;width:53.40px"><span>85127.40</span></div>
<div class="c slc" style="left:289.0px;width:53.00px"><span>85077.00</span></div>
<div class="c" style="left:342.4px;width:53.50px"><span>84473.19</span></div>
<div class="c" style="left:396.3px;width:117.60px"><span>2025.04.20 23:21:36</span></div>
<div class="c" style="left:514.3px;width:53.70px"><span>85077.00</span></div>
<div class="c" style="left:568.4px;width:53.80px"><span>-325.84</span></div>
<div class="c" style="left:622.6px;width:53.80px"><span>0.00</span></div>
<div class="c" style="left:676.8px;width:58.60px"><span>4 105.58</span></div>
</div>
<div class="row g" style="top:487.840px">
<div class="sl" style="left:289.20px;width:52.00px"></div>
<div class="c" style="left:0px;width:84.00px"><span>2025.04.20 23:20:57</span></div>
<div class="c t" style="left:84.4px;width:53.60px"><span>sell</span></div>
<div class="c" style="left:138.4px;width:42.20px"><span>81.52</span></div>
<div class="c t" style="left:181.0px;width:53.80px"><span>btcusdp</span></div>
<div class="c" style="left:235.2px;width:53.40px"><span>85053.00</span></div>
<div class="c slc" style="left:289.0px;width:53.00px"><span>85055.90</span></div>
<div class="c" style="left:342.4px;width:53.50px"><span>84452.09</span></div>
<div class="c" style="left:396.3px;width:117.60px"><span>2025.04.20 23:21:00</span></div>
<div class="c" style="left:514.3px;width:53.70px"><span>85055.90</span></div>
<div class="c" style="left:568.4px;width:53.80px"><span>-326.08</span></div>
<div class="c" style="left:622.6px;width:53.80px"><span>0.00</span></div>
<div class="c" style="left:676.8px;width:58.60px"><span>-236.41</span></div>
</div>
<div class="row" style="top:498.507px">
<div class="sl" style="left:289.20px;width:52.00px"></div>
<div class="c" style="left:0px;width:84.00px"><span>2025.04.20 23:21:47</span></div>
<div class="c t" style="left:84.4px;width:53.60px"><span>sell</span></div>
<div class="c" style="left:138.4px;width:42.20px"><span>81.79</span></div>
<div class="c t" style="left:181.0px;width:53.80px"><span>btcusdp</span></div>
<div class="c" style="left:235.2px;width:53.40px"><span>85088.30</span></div>
<div class="c slc" style="left:289.0px;width:53.00px"><span>85060.60</span></div>
<div class="c" style="left:342.4px;width:53.50px"><span>84456.79</span></div>
<div class="c" style="left:396.3px;width:117.60px"><span>2025.04.20 23:22:07</span></div>
<div class="c" style="left:514.3px;width:53.70px"><span>85060.60</span></div>
<div class="c" style="left:568.4px;width:53.80px"><span>-327.16</span></div>
<div class="c" style="left:622.6px;width:53.80px"><span>0.00</span></div>
<div class="c" style="left:676.8px;width:58.60px"><span>2 265.58</span></div>
</div>
<div class="row g" style="top:509.174px">
<div class="sl" style="left:289.20px;width:52.00px"></div>
<div class="c" style="left:0px;width:84.00px"><span>2025.04.20 23:21:37</span></div>
<div class="c t" style="left:84.4px;width:53.60px"><span>sell</span></div>
<div class="c" style="left:138.4px;width:42.20px"><span>81.83</span></div>
<div class="c t" style="left:181.0px;width:53.80px"><span>btcusdp</span></div>
<div class="c" style="left:235.2px;width:53.40px"><span>85077.95</span></div>
<div class="c slc" style="left:289.0px;width:53.00px"><span>85079.60</span></div>
<div class="c" style="left:342.4px;width:53.50px"><span>84475.79</span></div>
<div class="c" style="left:396.3px;width:117.60px"><span>2025.04.20 23:21:44</span></div>
<div class="c" style="left:514.3px;width:53.70px"><span>85079.60</span></div>
<div class="c" style="left:568.4px;width:53.80px"><span>-327.32</span></div>
<div class="c" style="left:622.6px;width:53.80px"><span>0.00</span></div>
<div class="c" style="left:676.8px;width:58.60px"><span>-135.02</span></div>
</div>
<div class="row" style="top:519.841px">
<div class="sl" style="left:289.20px;width:52.00px"></div>
<div class="c" style="left:0px;width:84.00px"><span>2025.04.20 23:22:16</span></div>
<div class="c t" style="left:84.4px;width:53.60px"><span>sell</span></div>
<div class="c" style="left:138.4px;width:42.20px"><span>81.98</span></div>
<div class="c t" style="left:181.0px;width:53.80px"><span>btcusdp</span></div>
<div class="c" style="left:235.2px;width:53.40px"><span>85100.40</span></div>
<div class="c slc" style="left:289.0px;width:53.00px"><span>85093.70</span></div>
<div class="c" style="left:342.4px;width:53.50px"><span>84489.89</span></div>
<div class="c" style="left:396.3px;width:117.60px"><span>2025.04.20 23:22:19</span></div>
<div class="c" style="left:514.3px;width:53.70px"><span>85093.70</span></div>
<div class="c" style="left:568.4px;width:53.80px"><span>-327.92</span></div>
<div class="c" style="left:622.6px;width:53.80px"><span>0.00</span></div>
<div class="c" style="left:676.8px;width:58.60px"><span>549.27</span></div>
</div>
<div class="row g" style="top:530.508px">
<div class="sl" style="left:289.20px;width:52.00px"></div>
<div class="c" style="left:0px;width:84.00px"><span>2025.04.20 23:22:38</span></div>
<div class="c t" style="left:84.4px;width:53.60px"><span>sell</span></div>
<div class="c" style="left:138.4px;width:42.20px"><span>81.99</span></div>
<div class="c t" style="left:181.0px;width:53.80px"><span>btcusdp</span></div>
<div class="c" style="left:235.2px;width:53.40px"><span>85145.80</span></div>
<div class="c slc" style="left:289.0px;width:53.00px"><span>85104.10</span></div>
<div class="c" style="left:342.4px;width:53.50px"><span>84500.29</span></div>
<div class="c" style="left:396.3px;width:117.60px"><span>2025.04.20 23:22:52</span></div>
<div class="c" style="left:514.3px;width:53.70px"><span>85104.10</span></div>
<div class="c" style="left:568.4px;width:53.80px"><span>-327.96</span></div>
<div class="c" style="left:622.6px;width:53.80px"><span>0.00</span></div>
<div class="c" style="left:676.8px;width:58.60px"><span>3 418.98</span></div>
</div>
<div id="tabs"></div>
<div class="abs" style="left:-2px;top:540.4px;width:18.6px;height:10.4px;background:#fff;border:1px solid #555;border-top:none"></div>
<div class="tab" style="left:-9.6px;color:#333">History</div>
<div class="tab" style="left:22px">News</div>
<div class="tab" style="left:48.4px">Alerts</div>
<div class="tab" style="left:75px">Mailbox</div>
<div class="tab" style="left:112.4px">Market</div>
<div class="tab" style="left:151px">Articles</div>
<div class="tab" style="left:183px">Code Base</div>
<div class="tab" style="left:223px">Experts</div>
<div class="tab" style="left:253.4px">Journal</div>
<div class="tsep" style="left:43px"></div>
<div class="tsep" style="left:69.6px"></div>
<div class="tsep" style="left:106.8px"></div>
<div class="tsep" style="left:146.2px"></div>
<div class="tsep" style="left:177.8px"></div>
<div class="tsep" style="left:217.6px"></div>
<div class="tsep" style="left:248.4px"></div>
<div class="tsep" style="left:279.4px"></div>
<div class="abs" style="left:98px;top:545.4px;font-size:4.8px;line-height:5px;color:#e02020;font-weight:bold">6</div>
<div class="abs" style="left:133px;top:545.4px;font-size:4.8px;line-height:5px;color:#e02020;font-weight:bold">123</div>
<div class="abs" style="left:0;top:552.1px;width:800px;height:1px;background:#fbfbfb"></div>
<div class="abs" style="left:0;top:555.6px;width:800px;height:0.8px;background:#dcdcdc"></div>
<div class="abs" style="left:545px;top:556.2px;font-size:6.2px;line-height:8px;color:#222;-webkit-text-stroke:0.1px #222">Default</div>
<div class="abs" style="left:541.5px;top:557px;width:0.8px;height:9px;background:#cfcfcf"></div>
<div class="abs" style="left:603.5px;top:557px;width:0.8px;height:9px;background:#cfcfcf"></div>
<div class="abs" style="left:658px;top:557px;width:0.8px;height:9px;background:#cfcfcf"></div>
<div class="abs" style="left:696px;top:557px;width:0.8px;height:9px;background:#cfcfcf"></div>
<div class="abs" style="left:733.5px;top:557px;width:0.8px;height:9px;background:#cfcfcf"></div>
<div class="abs" style="left:771px;top:557px;width:0.8px;height:9px;background:#cfcfcf"></div>
<div class="abs" style="left:45px;top:565px;width:755px;height:1px;background:#222"></div>
</body></html>
